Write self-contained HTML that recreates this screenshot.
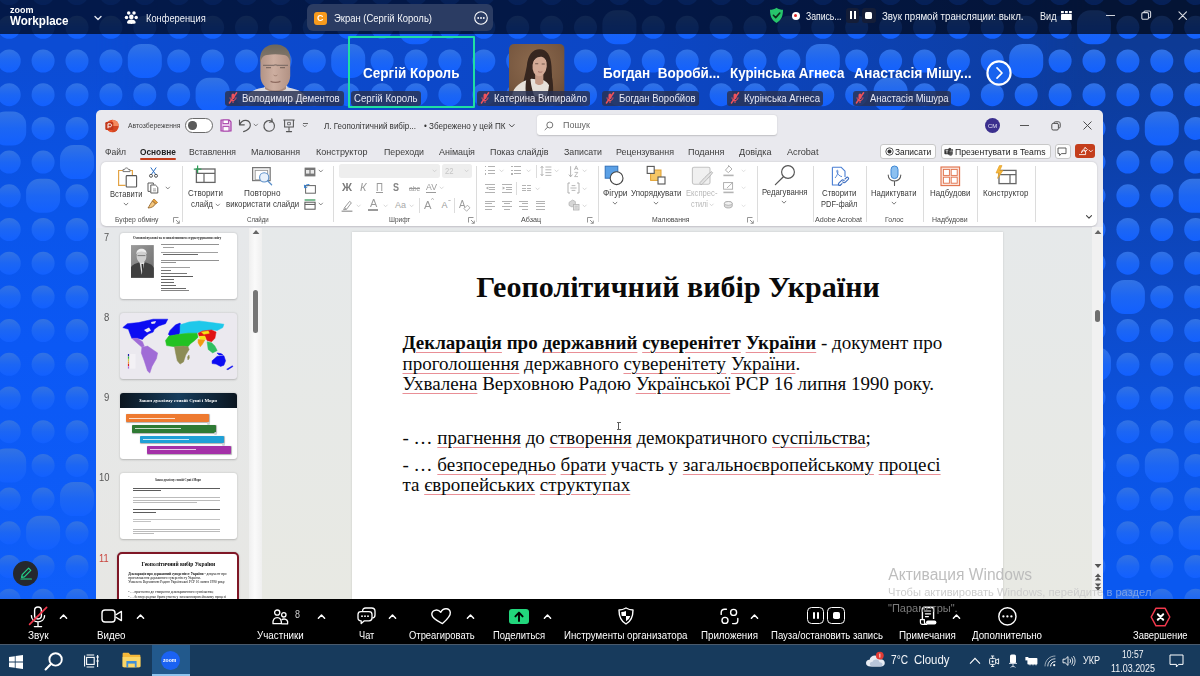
<!DOCTYPE html><html><head><meta charset="utf-8"><title>Zoom</title><style>
html,body{margin:0;padding:0;}
body{width:1200px;height:676px;overflow:hidden;position:relative;background:#0c4cd4;font-family:"Liberation Sans",sans-serif;}
.bg{position:absolute;left:0;top:0;}
.t{position:absolute;white-space:nowrap;transform-origin:0 50%;}
.i{position:absolute;overflow:visible;}
#topbar{position:absolute;left:0;top:0;width:1200px;height:33.5px;background:rgba(0,1,8,0.675);}
.lbl{position:absolute;top:90.8px;height:14.8px;border-radius:3px;background:rgba(42,50,82,0.84);}
#pptwin{position:absolute;left:95.5px;top:109.8px;width:1007.5px;height:489px;background:#e9e9ee;border-radius:5px 5px 0 0;}
.btn{position:absolute;top:143.8px;height:13.4px;border:0.8px solid #c8c8c8;border-radius:3px;background:#fdfdfd;}
#ribbon{position:absolute;left:100.5px;top:161.8px;width:996.5px;height:63.8px;background:#fff;border-radius:5px;box-shadow:0 0.5px 2px rgba(0,0,0,0.18);}
#panel{position:absolute;left:95.5px;top:227.5px;width:154px;height:372px;background:linear-gradient(#e6e8ea,#e7e7e4);}
#ptrack{position:absolute;left:249.3px;top:227.5px;width:13px;height:372px;background:linear-gradient(90deg,#efefef,#fafafa 45%,#efefef);}
#main{position:absolute;left:262.3px;top:227.5px;width:830px;height:372px;background:linear-gradient(#e6e9ea,#e8e9e3);}
.th{position:absolute;left:120px;width:117px;height:66.4px;background:#fff;border-radius:3px;box-shadow:0 0.5px 2px rgba(0,0,0,0.22);box-sizing:border-box;}
#slide{position:absolute;left:352.3px;top:232.4px;width:650.7px;height:367px;background:#fff;box-shadow:0 0 2px rgba(0,0,0,0.15);}
.st{position:absolute;white-space:nowrap;font-family:"Liberation Serif",serif;color:#0a0a0a;}
#ztool{position:absolute;left:0;top:598.6px;width:1200px;height:46px;background:#000;}
#taskbar{position:absolute;left:0;top:644.2px;width:1200px;height:32px;background:#173a5c;}
</style></head><body><svg class="bg" width="1200" height="676" viewBox="0 0 1200 676"><defs><linearGradient id="gT" x1="0" x2="1" y1="0" y2="0"><stop offset="0" stop-color="#0c4cd4"/><stop offset="0.55" stop-color="#0c46c4"/><stop offset="1" stop-color="#0d3a94"/></linearGradient><linearGradient id="gB" x1="0" x2="1" y1="0" y2="0"><stop offset="0" stop-color="#1462fa"/><stop offset="1" stop-color="#1659e2"/></linearGradient><linearGradient id="gM" x1="0" x2="0" y1="0" y2="1"><stop offset="0.05" stop-color="#000"/><stop offset="0.85" stop-color="#fff"/></linearGradient><mask id="mk"><rect width="1200" height="676" fill="url(#gM)"/></mask><linearGradient id="gD" x1="0" x2="0" y1="0" y2="1"><stop offset="0" stop-color="#3272e4"/><stop offset="0.5" stop-color="#1c66f4"/><stop offset="1" stop-color="#1260ff"/></linearGradient></defs><rect width="1200" height="676" fill="url(#gT)"/><defs><linearGradient id="gL" gradientUnits="userSpaceOnUse" x1="0" y1="0" x2="0" y2="676"><stop offset="0.0888" stop-color="#0c4cd4"/><stop offset="0.3180" stop-color="#0a55ea"/><stop offset="0.5133" stop-color="#0b58f5"/><stop offset="0.8876" stop-color="#0f5ef9"/></linearGradient><linearGradient id="gR" gradientUnits="userSpaceOnUse" x1="0" y1="0" x2="0" y2="676"><stop offset="0.0666" stop-color="#0d3a95"/><stop offset="0.2219" stop-color="#0c3fa8"/><stop offset="0.4438" stop-color="#0d4ac8"/><stop offset="0.6657" stop-color="#0b54e4"/><stop offset="0.8432" stop-color="#0a58f0"/></linearGradient><linearGradient id="fL" x1="0" x2="1"><stop offset="0.6" stop-color="#fff"/><stop offset="1" stop-color="#000"/></linearGradient><mask id="mL"><rect x="0" y="0" width="160" height="676" fill="url(#fL)"/></mask><linearGradient id="fR" x1="0" x2="1"><stop offset="0" stop-color="#000"/><stop offset="0.4" stop-color="#fff"/></linearGradient><mask id="mR"><rect x="1040" y="0" width="160" height="676" fill="url(#fR)"/></mask></defs><rect x="0" y="0" width="160" height="676" fill="url(#gL)" mask="url(#mL)"/><rect x="1040" y="0" width="160" height="676" fill="url(#gR)" mask="url(#mR)"/><g fill="url(#gD)"><circle cx="9.2" cy="-6.4" r="11.5"/><circle cx="43.1" cy="-6.4" r="11.5"/><circle cx="77.0" cy="-6.4" r="11.5"/><circle cx="110.9" cy="-6.4" r="11.5"/><circle cx="144.8" cy="-6.4" r="11.5"/><circle cx="178.7" cy="-6.4" r="11.5"/><circle cx="212.6" cy="-6.4" r="11.5"/><circle cx="246.5" cy="-6.4" r="11.5"/><circle cx="280.4" cy="-6.4" r="11.5"/><circle cx="314.3" cy="-6.4" r="11.5"/><circle cx="348.2" cy="-6.4" r="11.5"/><circle cx="382.1" cy="-6.4" r="11.5"/><circle cx="416.0" cy="-6.4" r="11.5"/><circle cx="449.9" cy="-6.4" r="11.5"/><circle cx="483.8" cy="-6.4" r="11.5"/><circle cx="517.7" cy="-6.4" r="11.5"/><circle cx="551.6" cy="-6.4" r="11.5"/><circle cx="585.5" cy="-6.4" r="11.5"/><circle cx="619.4" cy="-6.4" r="11.5"/><circle cx="653.3" cy="-6.4" r="11.5"/><circle cx="687.2" cy="-6.4" r="11.5"/><circle cx="721.1" cy="-6.4" r="11.5"/><circle cx="755.0" cy="-6.4" r="11.5"/><circle cx="788.9" cy="-6.4" r="11.5"/><circle cx="822.8" cy="-6.4" r="11.5"/><circle cx="856.7" cy="-6.4" r="11.5"/><circle cx="890.6" cy="-6.4" r="11.5"/><circle cx="924.5" cy="-6.4" r="11.5"/><circle cx="958.4" cy="-6.4" r="11.5"/><circle cx="992.3" cy="-6.4" r="11.5"/><circle cx="1026.2" cy="-6.4" r="11.5"/><circle cx="1060.1" cy="-6.4" r="11.5"/><circle cx="1094.0" cy="-6.4" r="11.5"/><circle cx="1127.9" cy="-6.4" r="11.5"/><circle cx="1161.8" cy="-6.4" r="11.5"/><circle cx="1195.7" cy="-6.4" r="11.5"/><circle cx="9.2" cy="27.3" r="11.5"/><circle cx="43.1" cy="27.3" r="11.5"/><circle cx="77.0" cy="27.3" r="11.5"/><circle cx="110.9" cy="27.3" r="11.5"/><circle cx="144.8" cy="27.3" r="11.5"/><circle cx="178.7" cy="27.3" r="11.5"/><circle cx="212.6" cy="27.3" r="11.5"/><circle cx="246.5" cy="27.3" r="11.5"/><circle cx="280.4" cy="27.3" r="11.5"/><circle cx="314.3" cy="27.3" r="11.5"/><circle cx="348.2" cy="27.3" r="11.5"/><circle cx="382.1" cy="27.3" r="11.5"/><rect x="399.0" y="10.3" width="34" height="34" rx="13.5"/><circle cx="449.9" cy="27.3" r="11.5"/><circle cx="483.8" cy="27.3" r="11.5"/><circle cx="517.7" cy="27.3" r="11.5"/><circle cx="551.6" cy="27.3" r="11.5"/><circle cx="585.5" cy="27.3" r="11.5"/><rect x="602.4" y="10.3" width="34" height="34" rx="13.5"/><circle cx="653.3" cy="27.3" r="11.5"/><circle cx="687.2" cy="27.3" r="11.5"/><circle cx="721.1" cy="27.3" r="11.5"/><circle cx="755.0" cy="27.3" r="11.5"/><circle cx="788.9" cy="27.3" r="11.5"/><circle cx="822.8" cy="27.3" r="11.5"/><circle cx="856.7" cy="27.3" r="11.5"/><circle cx="890.6" cy="27.3" r="11.5"/><circle cx="924.5" cy="27.3" r="11.5"/><circle cx="958.4" cy="27.3" r="11.5"/><circle cx="992.3" cy="27.3" r="11.5"/><circle cx="1026.2" cy="27.3" r="11.5"/><circle cx="1060.1" cy="27.3" r="11.5"/><rect x="1077.0" y="10.3" width="34" height="34" rx="13.5"/><circle cx="1127.9" cy="27.3" r="11.5"/><circle cx="1161.8" cy="27.3" r="11.5"/><circle cx="1195.7" cy="27.3" r="11.5"/><circle cx="9.2" cy="61.0" r="11.5"/><circle cx="43.1" cy="61.0" r="11.5"/><circle cx="77.0" cy="61.0" r="11.5"/><circle cx="110.9" cy="61.0" r="11.5"/><rect x="127.8" y="44.0" width="34" height="34" rx="13.5"/><circle cx="178.7" cy="61.0" r="11.5"/><circle cx="212.6" cy="61.0" r="11.5"/><circle cx="246.5" cy="61.0" r="11.5"/><circle cx="280.4" cy="61.0" r="11.5"/><circle cx="314.3" cy="61.0" r="11.5"/><rect x="331.2" y="44.0" width="34" height="34" rx="13.5"/><circle cx="382.1" cy="61.0" r="11.5"/><circle cx="416.0" cy="61.0" r="11.5"/><circle cx="449.9" cy="61.0" r="11.5"/><circle cx="483.8" cy="61.0" r="11.5"/><circle cx="517.7" cy="61.0" r="11.5"/><circle cx="551.6" cy="61.0" r="11.5"/><circle cx="585.5" cy="61.0" r="11.5"/><circle cx="619.4" cy="61.0" r="11.5"/><circle cx="653.3" cy="61.0" r="11.5"/><circle cx="687.2" cy="61.0" r="11.5"/><circle cx="721.1" cy="61.0" r="11.5"/><circle cx="755.0" cy="61.0" r="11.5"/><circle cx="788.9" cy="61.0" r="11.5"/><rect x="805.8" y="44.0" width="34" height="34" rx="13.5"/><circle cx="856.7" cy="61.0" r="11.5"/><circle cx="890.6" cy="61.0" r="11.5"/><circle cx="924.5" cy="61.0" r="11.5"/><circle cx="958.4" cy="61.0" r="11.5"/><circle cx="992.3" cy="61.0" r="11.5"/><rect x="1009.2" y="44.0" width="34" height="34" rx="13.5"/><circle cx="1060.1" cy="61.0" r="11.5"/><circle cx="1094.0" cy="61.0" r="11.5"/><circle cx="1127.9" cy="61.0" r="11.5"/><circle cx="1161.8" cy="61.0" r="11.5"/><circle cx="1195.7" cy="61.0" r="11.5"/><circle cx="9.2" cy="94.7" r="11.5"/><circle cx="43.1" cy="94.7" r="11.5"/><circle cx="77.0" cy="94.7" r="11.5"/><circle cx="110.9" cy="94.7" r="11.5"/><circle cx="144.8" cy="94.7" r="11.5"/><circle cx="178.7" cy="94.7" r="11.5"/><rect x="195.6" y="77.7" width="34" height="34" rx="13.5"/><circle cx="246.5" cy="94.7" r="11.5"/><circle cx="280.4" cy="94.7" r="11.5"/><circle cx="314.3" cy="94.7" r="11.5"/><circle cx="348.2" cy="94.7" r="11.5"/><circle cx="382.1" cy="94.7" r="11.5"/><circle cx="416.0" cy="94.7" r="11.5"/><circle cx="449.9" cy="94.7" r="11.5"/><circle cx="483.8" cy="94.7" r="11.5"/><circle cx="517.7" cy="94.7" r="11.5"/><circle cx="551.6" cy="94.7" r="11.5"/><circle cx="585.5" cy="94.7" r="11.5"/><circle cx="619.4" cy="94.7" r="11.5"/><circle cx="653.3" cy="94.7" r="11.5"/><circle cx="687.2" cy="94.7" r="11.5"/><circle cx="721.1" cy="94.7" r="11.5"/><circle cx="755.0" cy="94.7" r="11.5"/><circle cx="788.9" cy="94.7" r="11.5"/><circle cx="822.8" cy="94.7" r="11.5"/><circle cx="856.7" cy="94.7" r="11.5"/><rect x="873.6" y="77.7" width="34" height="34" rx="13.5"/><circle cx="924.5" cy="94.7" r="11.5"/><circle cx="958.4" cy="94.7" r="11.5"/><circle cx="992.3" cy="94.7" r="11.5"/><circle cx="1026.2" cy="94.7" r="11.5"/><circle cx="1060.1" cy="94.7" r="11.5"/><circle cx="1094.0" cy="94.7" r="11.5"/><circle cx="1127.9" cy="94.7" r="11.5"/><circle cx="1161.8" cy="94.7" r="11.5"/><circle cx="1195.7" cy="94.7" r="11.5"/><rect x="-7.8" y="111.4" width="34" height="34" rx="13.5"/><circle cx="43.1" cy="128.4" r="11.5"/><circle cx="77.0" cy="128.4" r="11.5"/><circle cx="110.9" cy="128.4" r="11.5"/><circle cx="1094.0" cy="128.4" r="11.5"/><circle cx="1127.9" cy="128.4" r="11.5"/><rect x="1144.8" y="111.4" width="34" height="34" rx="13.5"/><circle cx="1195.7" cy="128.4" r="11.5"/><circle cx="9.2" cy="162.1" r="11.5"/><circle cx="43.1" cy="162.1" r="11.5"/><rect x="60.0" y="145.1" width="34" height="34" rx="13.5"/><circle cx="110.9" cy="162.1" r="11.5"/><circle cx="1094.0" cy="162.1" r="11.5"/><circle cx="1127.9" cy="162.1" r="11.5"/><circle cx="1161.8" cy="162.1" r="11.5"/><circle cx="1195.7" cy="162.1" r="11.5"/><circle cx="9.2" cy="195.8" r="11.5"/><rect x="26.1" y="178.8" width="34" height="34" rx="13.5"/><circle cx="77.0" cy="195.8" r="11.5"/><circle cx="110.9" cy="195.8" r="11.5"/><circle cx="1094.0" cy="195.8" r="11.5"/><circle cx="1127.9" cy="195.8" r="11.5"/><circle cx="1161.8" cy="195.8" r="11.5"/><rect x="1178.7" y="178.8" width="34" height="34" rx="13.5"/><circle cx="9.2" cy="229.5" r="11.5"/><circle cx="43.1" cy="229.5" r="11.5"/><circle cx="77.0" cy="229.5" r="11.5"/><circle cx="110.9" cy="229.5" r="11.5"/><circle cx="1094.0" cy="229.5" r="11.5"/><circle cx="1127.9" cy="229.5" r="11.5"/><circle cx="1161.8" cy="229.5" r="11.5"/><circle cx="1195.7" cy="229.5" r="11.5"/><circle cx="9.2" cy="263.2" r="11.5"/><circle cx="43.1" cy="263.2" r="11.5"/><circle cx="77.0" cy="263.2" r="11.5"/><circle cx="110.9" cy="263.2" r="11.5"/><circle cx="1094.0" cy="263.2" r="11.5"/><circle cx="1127.9" cy="263.2" r="11.5"/><circle cx="1161.8" cy="263.2" r="11.5"/><circle cx="1195.7" cy="263.2" r="11.5"/><circle cx="9.2" cy="296.9" r="11.5"/><circle cx="43.1" cy="296.9" r="11.5"/><circle cx="77.0" cy="296.9" r="11.5"/><circle cx="110.9" cy="296.9" r="11.5"/><circle cx="1094.0" cy="296.9" r="11.5"/><rect x="1110.9" y="279.9" width="34" height="34" rx="13.5"/><circle cx="1161.8" cy="296.9" r="11.5"/><circle cx="1195.7" cy="296.9" r="11.5"/><circle cx="9.2" cy="330.6" r="11.5"/><circle cx="43.1" cy="330.6" r="11.5"/><circle cx="77.0" cy="330.6" r="11.5"/><circle cx="110.9" cy="330.6" r="11.5"/><circle cx="1094.0" cy="330.6" r="11.5"/><circle cx="1127.9" cy="330.6" r="11.5"/><circle cx="1161.8" cy="330.6" r="11.5"/><circle cx="1195.7" cy="330.6" r="11.5"/><circle cx="9.2" cy="364.3" r="11.5"/><circle cx="43.1" cy="364.3" r="11.5"/><circle cx="77.0" cy="364.3" r="11.5"/><circle cx="110.9" cy="364.3" r="11.5"/><rect x="1077.0" y="347.3" width="34" height="34" rx="13.5"/><circle cx="1127.9" cy="364.3" r="11.5"/><circle cx="1161.8" cy="364.3" r="11.5"/><circle cx="1195.7" cy="364.3" r="11.5"/><circle cx="9.2" cy="398.0" r="11.5"/><circle cx="43.1" cy="398.0" r="11.5"/><circle cx="77.0" cy="398.0" r="11.5"/><circle cx="110.9" cy="398.0" r="11.5"/><circle cx="1094.0" cy="398.0" r="11.5"/><circle cx="1127.9" cy="398.0" r="11.5"/><circle cx="1161.8" cy="398.0" r="11.5"/><circle cx="1195.7" cy="398.0" r="11.5"/><circle cx="9.2" cy="431.7" r="11.5"/><circle cx="43.1" cy="431.7" r="11.5"/><circle cx="77.0" cy="431.7" r="11.5"/><circle cx="110.9" cy="431.7" r="11.5"/><circle cx="1094.0" cy="431.7" r="11.5"/><circle cx="1127.9" cy="431.7" r="11.5"/><circle cx="1161.8" cy="431.7" r="11.5"/><circle cx="1195.7" cy="431.7" r="11.5"/><rect x="-7.8" y="448.4" width="34" height="34" rx="13.5"/><circle cx="43.1" cy="465.4" r="11.5"/><circle cx="77.0" cy="465.4" r="11.5"/><circle cx="110.9" cy="465.4" r="11.5"/><circle cx="1094.0" cy="465.4" r="11.5"/><circle cx="1127.9" cy="465.4" r="11.5"/><rect x="1144.8" y="448.4" width="34" height="34" rx="13.5"/><circle cx="1195.7" cy="465.4" r="11.5"/><circle cx="9.2" cy="499.1" r="11.5"/><circle cx="43.1" cy="499.1" r="11.5"/><rect x="60.0" y="482.1" width="34" height="34" rx="13.5"/><circle cx="110.9" cy="499.1" r="11.5"/><circle cx="1094.0" cy="499.1" r="11.5"/><circle cx="1127.9" cy="499.1" r="11.5"/><circle cx="1161.8" cy="499.1" r="11.5"/><circle cx="1195.7" cy="499.1" r="11.5"/><circle cx="9.2" cy="532.8" r="11.5"/><rect x="26.1" y="515.8" width="34" height="34" rx="13.5"/><circle cx="77.0" cy="532.8" r="11.5"/><circle cx="110.9" cy="532.8" r="11.5"/><circle cx="1094.0" cy="532.8" r="11.5"/><circle cx="1127.9" cy="532.8" r="11.5"/><circle cx="1161.8" cy="532.8" r="11.5"/><rect x="1178.7" y="515.8" width="34" height="34" rx="13.5"/><circle cx="9.2" cy="566.5" r="11.5"/><circle cx="43.1" cy="566.5" r="11.5"/><circle cx="77.0" cy="566.5" r="11.5"/><circle cx="110.9" cy="566.5" r="11.5"/><circle cx="1094.0" cy="566.5" r="11.5"/><circle cx="1127.9" cy="566.5" r="11.5"/><circle cx="1161.8" cy="566.5" r="11.5"/><circle cx="1195.7" cy="566.5" r="11.5"/><circle cx="9.2" cy="600.2" r="11.5"/><circle cx="43.1" cy="600.2" r="11.5"/><circle cx="77.0" cy="600.2" r="11.5"/><circle cx="110.9" cy="600.2" r="11.5"/><circle cx="144.8" cy="600.2" r="11.5"/><circle cx="178.7" cy="600.2" r="11.5"/><circle cx="212.6" cy="600.2" r="11.5"/><circle cx="246.5" cy="600.2" r="11.5"/><circle cx="280.4" cy="600.2" r="11.5"/><circle cx="314.3" cy="600.2" r="11.5"/><circle cx="348.2" cy="600.2" r="11.5"/><circle cx="382.1" cy="600.2" r="11.5"/><circle cx="416.0" cy="600.2" r="11.5"/><circle cx="449.9" cy="600.2" r="11.5"/><circle cx="483.8" cy="600.2" r="11.5"/><circle cx="517.7" cy="600.2" r="11.5"/><circle cx="551.6" cy="600.2" r="11.5"/><circle cx="585.5" cy="600.2" r="11.5"/><circle cx="619.4" cy="600.2" r="11.5"/><circle cx="653.3" cy="600.2" r="11.5"/><circle cx="687.2" cy="600.2" r="11.5"/><circle cx="721.1" cy="600.2" r="11.5"/><circle cx="755.0" cy="600.2" r="11.5"/><circle cx="788.9" cy="600.2" r="11.5"/><circle cx="822.8" cy="600.2" r="11.5"/><circle cx="856.7" cy="600.2" r="11.5"/><circle cx="890.6" cy="600.2" r="11.5"/><circle cx="924.5" cy="600.2" r="11.5"/><circle cx="958.4" cy="600.2" r="11.5"/><circle cx="992.3" cy="600.2" r="11.5"/><circle cx="1026.2" cy="600.2" r="11.5"/><circle cx="1060.1" cy="600.2" r="11.5"/><circle cx="1094.0" cy="600.2" r="11.5"/><circle cx="1127.9" cy="600.2" r="11.5"/><circle cx="1161.8" cy="600.2" r="11.5"/><circle cx="1195.7" cy="600.2" r="11.5"/></g></svg><div id="topbar"><span class="t" style="left:10.0px;top:3.8px;font-size:9.6px;line-height:12px;color:#fff;font-weight:bold;transform:scaleX(0.938);">zoom</span><span class="t" style="left:10.0px;top:14.2px;font-size:12px;line-height:14px;color:#fff;font-weight:bold;transform:scaleX(0.968);">Workplace</span><svg class="i" style="left:92.5px;top:13.2px" width="10" height="10" viewBox="0 0 10 10"><path d="M2 3.5 L5 6.5 L8 3.5" fill="none" stroke="#dfe4ee" stroke-width="1.4" stroke-linecap="round" stroke-linejoin="round"/></svg><svg class="i" style="left:124px;top:10px" width="15" height="15" viewBox="0 0 15 15"><g fill="#fff"><circle cx="4.7" cy="2.9" r="1.75"/><circle cx="10" cy="2.9" r="1.75"/><circle cx="2.5" cy="7.4" r="1.75"/><circle cx="12.2" cy="7.4" r="1.75"/><circle cx="7.35" cy="6.9" r="2.3"/><path d="M3 13 C3 10.6 5 9.6 7.35 9.6 C9.7 9.6 11.7 10.6 11.7 13 C10.4 14.2 4.3 14.2 3 13Z"/></g></svg><span class="t" style="left:146.3px;top:11.7px;font-size:10.5px;line-height:13px;color:#eef0f6;transform:scaleX(0.887);">Конференция</span><div style="position:absolute;left:307px;top:4px;width:186px;height:27px;border-radius:6px;background:#2b3c63"></div><div style="position:absolute;left:314px;top:12px;width:12.5px;height:12.5px;border-radius:3px;background:#f79a1c"></div><span class="t" style="left:317.0px;top:12.8px;font-size:9px;line-height:11px;color:#fff;font-weight:bold;transform:scaleX(0.985);">C</span><span class="t" style="left:334.0px;top:11.5px;font-size:11px;line-height:13px;color:#f4f6fa;transform:scaleX(0.860);">Экран (Сергій Король)</span><svg class="i" style="left:473px;top:10px" width="16" height="16" viewBox="0 0 16 16"><circle cx="8" cy="8" r="6.3" fill="none" stroke="#fff" stroke-width="1.1"/><g fill="#fff"><circle cx="5.2" cy="8" r="0.9"/><circle cx="8" cy="8" r="0.9"/><circle cx="10.8" cy="8" r="0.9"/></g></svg><svg class="i" style="left:769px;top:7.4px" width="15" height="17" viewBox="0 0 15 17"><path d="M7.5 0.8 C9.5 2.2 11.8 2.8 14 2.8 C14 8.5 12.6 13.2 7.5 16 C2.4 13.2 1 8.5 1 2.8 C3.2 2.8 5.5 2.2 7.5 0.8Z" fill="#27c46b"/><path d="M4.4 8.3 L6.7 10.6 L10.8 6" fill="none" stroke="#0c2a1a" stroke-width="1.6" stroke-linecap="round" stroke-linejoin="round"/></svg><div style="position:absolute;left:791.5px;top:11.6px;width:8px;height:8px;border-radius:50%;background:#fff"></div><div style="position:absolute;left:794px;top:14.1px;width:3px;height:3px;border-radius:50%;background:#e02828"></div><span class="t" style="left:805.5px;top:10.3px;font-size:10.5px;line-height:13px;color:#f2f4f8;transform:scaleX(0.822);">Запись...</span><div style="position:absolute;left:846px;top:7.8px;width:13px;height:15px;border-radius:3px;background:#141d38"></div><div style="position:absolute;left:850px;top:11.3px;width:2px;height:8px;background:#fff"></div><div style="position:absolute;left:853.6px;top:11.3px;width:2px;height:8px;background:#fff"></div><div style="position:absolute;left:861.5px;top:7.8px;width:14px;height:15px;border-radius:3px;background:#141d38"></div><div style="position:absolute;left:865px;top:11.8px;width:7px;height:7px;border-radius:1.5px;background:#fff"></div><span class="t" style="left:882.0px;top:10.3px;font-size:10.5px;line-height:13px;color:#f2f4f8;transform:scaleX(0.924);">Звук прямой трансляции: выкл.</span><span class="t" style="left:1039.5px;top:10.3px;font-size:10.5px;line-height:13px;color:#f2f4f8;transform:scaleX(0.869);">Вид</span><svg class="i" style="left:1061px;top:11.4px" width="11" height="9" viewBox="0 0 11 9"><g fill="#fff"><rect x="0" y="0" width="2.8" height="2.2"/><rect x="4" y="0" width="2.8" height="2.2"/><rect x="8" y="0" width="2.8" height="2.2"/><rect x="0" y="3" width="10.8" height="6" rx="0.6"/></g></svg><div style="position:absolute;left:1106px;top:15px;width:9.2px;height:1.1px;background:#cfd3dc"></div><svg class="i" style="left:1141.4px;top:10.2px" width="10.6" height="10.6" viewBox="0 0 13 13"><rect x="1" y="3.2" width="8.2" height="8.2" rx="1.5" fill="none" stroke="#d4d7df" stroke-width="1.3"/><path d="M3.6 3.2 V2.6 C3.6 1.8 4.2 1.2 5 1.2 H10 C11 1.2 11.8 2 11.8 3 V8 C11.8 8.8 11.2 9.4 10.4 9.4 H9.4" fill="none" stroke="#d4d7df" stroke-width="1.3"/></svg><svg class="i" style="left:1177.6px;top:10.8px" width="9.4" height="9.4" viewBox="0 0 12 12"><path d="M1.2 1.2 L10.8 10.8 M10.8 1.2 L1.2 10.8" stroke="#d8dbe2" stroke-width="1.4" stroke-linecap="round"/></svg></div><svg class="i" style="left:226px;top:40px" width="92" height="62" viewBox="0 0 92 62"><defs><linearGradient id="sk" x1="0" x2="1"><stop offset="0" stop-color="#b39486"/><stop offset="0.45" stop-color="#cdaea0"/><stop offset="1" stop-color="#b29284"/></linearGradient><linearGradient id="hr" x1="0" x2="0" y1="0" y2="1"><stop offset="0" stop-color="#6c675c"/><stop offset="1" stop-color="#8a7c70"/></linearGradient></defs><path d="M18 62 C20 53 28 49 38 47.5 L40 45 H60 L62 47.5 C72 49 80 53 83 62Z" fill="#d6d6de"/><path d="M39 40 H60 V49 C55 53 45 53 39 49Z" fill="#a8897a"/><path d="M34.4 24 C34 11 40 5.6 49.3 5.6 C58.6 5.6 64.4 11 64.2 24 V36 C64 44 58 50.6 49.3 50.6 C40.6 50.6 34.6 44 34.4 36Z" fill="url(#sk)"/><path d="M34.2 24 C32.6 10 40 4.6 49.3 4.6 C58.6 4.6 66 10 64.4 24 C63.6 18 61.6 15.6 58 15 C52 14 46.6 14 41 15 C37 15.6 35 18 34.2 24Z" fill="url(#hr)"/><path d="M37 25.4 H47 M52 25.4 H62 M47 25.6 C48.6 24.6 50.4 24.6 52 25.6" stroke="#6f625c" stroke-width="1.3" fill="none" opacity="0.75"/><path d="M40 27.6 H45 M54 27.6 H59" stroke="#4c403a" stroke-width="1.1" opacity="0.55"/><path d="M47.6 35 C48.6 36 50.4 36 51.4 35" stroke="#8e6e60" stroke-width="0.9" fill="none" opacity="0.8"/><path d="M44.6 41.4 C47 42.6 52 42.6 54.4 41.4" stroke="#7e5a50" stroke-width="1.2" fill="none" opacity="0.8"/></svg><div class="lbl" style="left:225px;width:118.5px"></div><svg class="i" style="left:227.8px;top:92.2px" width="10" height="12" viewBox="0 0 10 12"><g fill="none" stroke="#ee525c" stroke-linecap="round"><rect x="3.5" y="1.4" width="3" height="5.6" rx="1.5" fill="#ee525c" stroke="none"/><path d="M2 5.8 C2 9.6 8 9.6 8 5.8 M5 8.8 V10.6" stroke-width="1"/><path d="M8.6 0.8 L1.4 11" stroke-width="1.5"/></g></svg><span class="t" style="left:242.3px;top:92.1px;font-size:10.5px;line-height:13px;color:#e6e8f4;transform:scaleX(0.920);">Володимир Дементов</span><div style="position:absolute;left:347.5px;top:36.3px;width:123px;height:67.4px;border:2px solid #1fe0a2;border-radius:1px"></div><span class="t" style="left:363.0px;top:65.0px;font-size:14.5px;line-height:17px;color:#fff;font-weight:bold;transform:scaleX(0.931);">Сергій Король</span><div class="lbl" style="left:350.5px;width:70px"></div><span class="t" style="left:353.8px;top:92.1px;font-size:10.5px;line-height:13px;color:#e6e8f4;transform:scaleX(0.919);">Сергій Король</span><svg class="i" style="left:509.2px;top:44.4px" width="55.6" height="52.3" viewBox="0 0 54.4 52" preserveAspectRatio="none"><defs><clipPath id="kc"><rect width="54.4" height="58" rx="5"/></clipPath><radialGradient id="kb" cx="0.45" cy="0.35" r="0.85"><stop offset="0" stop-color="#8c6a4e"/><stop offset="0.6" stop-color="#785840"/><stop offset="1" stop-color="#604632"/></radialGradient></defs><g clip-path="url(#kc)"><rect width="54.4" height="58" fill="url(#kb)"/><path d="M12 50 C13 40 16 30 17.4 22 C18.4 11 23 5.4 30 5.3 C37 5.4 41 11 41.6 22 C42 32 43 42 41.6 50Z" fill="#36261f"/><path d="M3 52 C4 42 12 37 22 34.6 L34 36 C38 38 41.6 43 42.8 52Z" fill="#e6e1da"/><path d="M25.6 29 H33.6 V39 C31 41.4 28 41.4 25.6 39Z" fill="#c49a86"/><ellipse cx="30" cy="21.6" rx="7" ry="10.6" fill="#d3aa96" transform="rotate(6 30 21.6)"/><path d="M22 21 C21.6 12 25 8.4 30 8.4 C35 8.4 38.6 11.4 38.2 21 C36.6 15 34 12.6 31 12.6 C27 12.6 23.6 15.6 22 21Z" fill="#36261f"/><path d="M21.6 20 C20 32 21 42 25 52 H17 C15 42 17 30 21.6 20Z M38.4 20 C40.4 32 40 42 37 52 H43 C44 42 42.4 30 38.4 20Z" fill="#36261f"/><path d="M25.6 19.6 H28.6 M32 20 H35" stroke="#4a342c" stroke-width="1" opacity="0.7"/><path d="M28.4 27.4 C29.6 28.2 31.4 28.2 32.6 27.6" stroke="#a06a60" stroke-width="0.9" fill="none"/></g></svg><div class="lbl" style="left:477px;width:113px"></div><svg class="i" style="left:479.8px;top:92.2px" width="10" height="12" viewBox="0 0 10 12"><g fill="none" stroke="#ee525c" stroke-linecap="round"><rect x="3.5" y="1.4" width="3" height="5.6" rx="1.5" fill="#ee525c" stroke="none"/><path d="M2 5.8 C2 9.6 8 9.6 8 5.8 M5 8.8 V10.6" stroke-width="1"/><path d="M8.6 0.8 L1.4 11" stroke-width="1.5"/></g></svg><span class="t" style="left:494.0px;top:92.1px;font-size:10.5px;line-height:13px;color:#e6e8f4;transform:scaleX(0.907);">Катерина Випирайло</span><span class="t" style="left:603.0px;top:65.0px;font-size:14.5px;line-height:17px;color:#fff;font-weight:bold;transform:scaleX(0.930);white-space:pre;">Богдан  Воробй...</span><div class="lbl" style="left:602px;width:96.7px"></div><svg class="i" style="left:604.8px;top:92.2px" width="10" height="12" viewBox="0 0 10 12"><g fill="none" stroke="#ee525c" stroke-linecap="round"><rect x="3.5" y="1.4" width="3" height="5.6" rx="1.5" fill="#ee525c" stroke="none"/><path d="M2 5.8 C2 9.6 8 9.6 8 5.8 M5 8.8 V10.6" stroke-width="1"/><path d="M8.6 0.8 L1.4 11" stroke-width="1.5"/></g></svg><span class="t" style="left:619.0px;top:92.1px;font-size:10.5px;line-height:13px;color:#e6e8f4;transform:scaleX(0.904);">Богдан Воробйов</span><span class="t" style="left:730.0px;top:65.0px;font-size:14.5px;line-height:17px;color:#fff;font-weight:bold;transform:scaleX(0.921);">Курінська Агнеса</span><div class="lbl" style="left:727px;width:96px"></div><svg class="i" style="left:729.8px;top:92.2px" width="10" height="12" viewBox="0 0 10 12"><g fill="none" stroke="#ee525c" stroke-linecap="round"><rect x="3.5" y="1.4" width="3" height="5.6" rx="1.5" fill="#ee525c" stroke="none"/><path d="M2 5.8 C2 9.6 8 9.6 8 5.8 M5 8.8 V10.6" stroke-width="1"/><path d="M8.6 0.8 L1.4 11" stroke-width="1.5"/></g></svg><span class="t" style="left:744.0px;top:92.1px;font-size:10.5px;line-height:13px;color:#e6e8f4;transform:scaleX(0.915);">Курінська Агнеса</span><span class="t" style="left:853.7px;top:65.0px;font-size:14.5px;line-height:17px;color:#fff;font-weight:bold;transform:scaleX(0.963);">Анастасія Мішу...</span><div class="lbl" style="left:852.5px;width:98.7px"></div><svg class="i" style="left:855.3px;top:92.2px" width="10" height="12" viewBox="0 0 10 12"><g fill="none" stroke="#ee525c" stroke-linecap="round"><rect x="3.5" y="1.4" width="3" height="5.6" rx="1.5" fill="#ee525c" stroke="none"/><path d="M2 5.8 C2 9.6 8 9.6 8 5.8 M5 8.8 V10.6" stroke-width="1"/><path d="M8.6 0.8 L1.4 11" stroke-width="1.5"/></g></svg><span class="t" style="left:869.5px;top:92.1px;font-size:10.5px;line-height:13px;color:#e6e8f4;transform:scaleX(0.903);">Анастасія Мішура</span><svg class="i" style="left:985px;top:58.5px" width="28" height="28" viewBox="0 0 28 28"><circle cx="14" cy="14" r="11.6" fill="#1763ee" stroke="#fff" stroke-width="2.1"/><path d="M12 8.8 L17 14 L12 19.2" fill="none" stroke="#fff" stroke-width="1.7" stroke-linecap="round" stroke-linejoin="round"/></svg><div id="pptwin"></div><svg class="i" style="left:104.5px;top:118.5px" width="14" height="14" viewBox="0 0 14 14"><circle cx="7.4" cy="7" r="6.3" fill="#e8532b"/><path d="M7.4 0.7 A6.3 6.3 0 0 1 13.7 7 H7.4Z" fill="#f48a5e"/><path d="M7.4 13.3 A6.3 6.3 0 0 0 13.7 7 H7.4Z" fill="#c43e1c" opacity="0.6"/><rect x="0.3" y="3" width="8" height="8" rx="1.2" fill="#c2371a"/><path d="M3 9.3 V4.8 H4.9 C6 4.8 6.6 5.4 6.6 6.3 C6.6 7.2 6 7.8 4.9 7.8 H3.2" fill="none" stroke="#fff" stroke-width="1"/></svg><span class="t" style="left:128.0px;top:121.0px;font-size:7.6px;line-height:9px;color:#444;transform:scaleX(0.898);">Автозбереження</span><div style="position:absolute;left:185px;top:118.3px;width:26px;height:12.4px;border:1px solid #6a6a6a;border-radius:8px;background:#fff"></div><div style="position:absolute;left:188.3px;top:121.3px;width:8.4px;height:8.4px;border-radius:50%;background:#5a5a5a"></div><svg class="i" style="left:219.5px;top:119px" width="12" height="13" viewBox="0 0 12 13"><path d="M1 1 H9.2 L11 2.8 V12 H1Z" fill="#e9c6ea" stroke="#a63ca8" stroke-width="1.2" stroke-linejoin="round"/><rect x="3" y="1" width="5.4" height="3.6" fill="#fff" stroke="#a63ca8" stroke-width="0.9"/><rect x="3" y="7.6" width="6" height="4.4" fill="#fff" stroke="#a63ca8" stroke-width="0.9"/></svg><svg class="i" style="left:238px;top:118px" width="14" height="15" viewBox="0 0 14 15"><path d="M1.5 2 V6.8 H6.3 M1.8 6.6 C3 3.6 5.4 2.2 8 2.4 C11 2.7 12.6 5 12.3 7.6 C12 10 9.6 12.2 5.6 13.6" fill="none" stroke="#555" stroke-width="1.15" stroke-linecap="round" stroke-linejoin="round"/></svg><svg class="i" style="left:252.7px;top:123.4px" width="5.6" height="4.2" viewBox="0 0 8 6"><path d="M1.5 1.6 L4 4.2 L6.5 1.6" fill="none" stroke="#555" stroke-width="1" stroke-linecap="round" stroke-linejoin="round"/></svg><svg class="i" style="left:262px;top:118px" width="14" height="15" viewBox="0 0 14 15"><path d="M9.6 3 C6.4 1.6 2.6 3.4 2 7 C1.4 10.6 4.2 13.4 7.4 13.2 C10.4 13 12.6 10.6 12.4 7.4 C12.3 5.6 11.4 4.2 10.2 3.4 M9.8 0.8 L10.3 3.6 L7.4 4.2" fill="none" stroke="#555" stroke-width="1.15" stroke-linecap="round" stroke-linejoin="round"/></svg><svg class="i" style="left:282.5px;top:118.5px" width="12" height="14" viewBox="0 0 12 14"><path d="M0.8 1 H11.2 M1.6 1 V8 H10.4 V1 M6 8 V11.6 M3.4 12.6 H8.6" fill="none" stroke="#555" stroke-width="1.05" stroke-linecap="round"/><path d="M4.6 3.4 H7.4 V5.8 H4.6Z" fill="none" stroke="#555" stroke-width="0.8"/></svg><div style="position:absolute;left:302.5px;top:122.5px;width:5px;height:1px;background:#666"></div><svg class="i" style="left:302.2px;top:124.4px" width="5.6" height="4.2" viewBox="0 0 8 6"><path d="M1.5 1.6 L4 4.2 L6.5 1.6" fill="none" stroke="#555" stroke-width="1" stroke-linecap="round" stroke-linejoin="round"/></svg><span class="t" style="left:324.0px;top:120.6px;font-size:8.6px;line-height:10px;color:#333;transform:scaleX(0.935);">Л. Геополітичний вибір...</span><span class="t" style="left:424.0px;top:120.6px;font-size:8.6px;line-height:10px;color:#333;transform:scaleX(0.939);">• Збережено у цей ПК</span><svg class="i" style="left:508.2px;top:123.0px" width="7.6" height="5.7" viewBox="0 0 8 6"><path d="M1.5 1.6 L4 4.2 L6.5 1.6" fill="none" stroke="#444" stroke-width="1" stroke-linecap="round" stroke-linejoin="round"/></svg><div style="position:absolute;left:536.5px;top:115.3px;width:240.5px;height:20px;background:#fff;border-radius:3px;box-shadow:0 0.5px 1.5px rgba(0,0,0,0.18)"></div><svg class="i" style="left:543.5px;top:120.5px" width="10" height="10" viewBox="0 0 10 10"><circle cx="5.8" cy="4" r="3" fill="none" stroke="#666" stroke-width="0.9"/><path d="M3.6 6.2 L1 8.8" stroke="#666" stroke-width="0.9" stroke-linecap="round"/></svg><span class="t" style="left:563.0px;top:120.1px;font-size:9.3px;line-height:11px;color:#666;transform:scaleX(0.963);">Пошук</span><div style="position:absolute;left:985px;top:118px;width:15.4px;height:15.4px;border-radius:50%;background:#3b2f8e"></div><span class="t" style="left:988.2px;top:122.3px;font-size:6.2px;line-height:7px;color:#e6e4f4;transform:scaleX(0.951);">СМ</span><div style="position:absolute;left:1020px;top:125px;width:8.5px;height:1px;background:#555"></div><svg class="i" style="left:1050.5px;top:120.5px" width="10" height="10" viewBox="0 0 10 10"><rect x="0.8" y="2.4" width="6.6" height="6.6" rx="1.4" fill="none" stroke="#444" stroke-width="0.95"/><path d="M2.8 2.2 C2.9 1.3 3.5 0.8 4.3 0.8 H7.4 C8.5 0.8 9.2 1.5 9.2 2.6 V5.8 C9.2 6.6 8.7 7.1 7.8 7.2" fill="none" stroke="#444" stroke-width="0.95"/></svg><svg class="i" style="left:1082.5px;top:121px" width="9" height="9" viewBox="0 0 9 9"><path d="M0.8 0.8 L8.2 8.2 M8.2 0.8 L0.8 8.2" stroke="#444" stroke-width="0.95" stroke-linecap="round"/></svg><span class="t" style="left:105.0px;top:145.6px;font-size:9.6px;line-height:12px;color:#3c3c3c;transform:scaleX(0.890);">Файл</span><span class="t" style="left:140.0px;top:145.6px;font-size:9.6px;line-height:12px;color:#1e1e1e;font-weight:bold;transform:scaleX(0.867);">Основне</span><span class="t" style="left:189.0px;top:145.6px;font-size:9.6px;line-height:12px;color:#3c3c3c;transform:scaleX(0.896);">Вставлення</span><span class="t" style="left:251.0px;top:145.6px;font-size:9.6px;line-height:12px;color:#3c3c3c;transform:scaleX(0.936);">Малювання</span><span class="t" style="left:316.0px;top:145.6px;font-size:9.6px;line-height:12px;color:#3c3c3c;transform:scaleX(0.941);">Конструктор</span><span class="t" style="left:384.0px;top:145.6px;font-size:9.6px;line-height:12px;color:#3c3c3c;transform:scaleX(0.920);">Переходи</span><span class="t" style="left:439.0px;top:145.6px;font-size:9.6px;line-height:12px;color:#3c3c3c;transform:scaleX(0.932);">Анімація</span><span class="t" style="left:490.0px;top:145.6px;font-size:9.6px;line-height:12px;color:#3c3c3c;transform:scaleX(0.930);">Показ слайдів</span><span class="t" style="left:564.0px;top:145.6px;font-size:9.6px;line-height:12px;color:#3c3c3c;transform:scaleX(0.918);">Записати</span><span class="t" style="left:616.0px;top:145.6px;font-size:9.6px;line-height:12px;color:#3c3c3c;transform:scaleX(0.927);">Рецензування</span><span class="t" style="left:688.0px;top:145.6px;font-size:9.6px;line-height:12px;color:#3c3c3c;transform:scaleX(0.942);">Подання</span><span class="t" style="left:739.0px;top:145.6px;font-size:9.6px;line-height:12px;color:#3c3c3c;transform:scaleX(0.941);">Довідка</span><span class="t" style="left:787.0px;top:145.6px;font-size:9.6px;line-height:12px;color:#3c3c3c;transform:scaleX(0.952);">Acrobat</span><div style="position:absolute;left:140px;top:157.6px;width:36px;height:2px;background:#c43e1c;border-radius:1px"></div><div class="btn" style="left:880px;width:54px"></div><svg class="i" style="left:884.5px;top:146.5px" width="9" height="9" viewBox="0 0 9 9"><circle cx="4.5" cy="4.5" r="3.7" fill="none" stroke="#333" stroke-width="0.8"/><circle cx="4.5" cy="4.5" r="2" fill="#333"/></svg><span class="t" style="left:894.6px;top:145.8px;font-size:9.4px;line-height:11px;color:#222;transform:scaleX(0.898);">Записати</span><div class="btn" style="left:941px;width:107.5px"></div><svg class="i" style="left:943.6px;top:146.6px" width="9.2" height="9.2" viewBox="0 0 10 10"><circle cx="6.3" cy="2.6" r="1.7" fill="#444"/><circle cx="8.8" cy="3.4" r="1.1" fill="#555"/><path d="M4.4 4.6 H9.6 V7.2 C9.6 8.6 8.6 9.4 7.2 9.4 C6 9.4 5 8.8 4.4 7.8Z" fill="#555"/><rect x="0.4" y="2.4" width="5.6" height="5.6" rx="0.8" fill="#333"/><path d="M1.8 4 H4.6 M3.2 4 V7" stroke="#fff" stroke-width="0.8"/></svg><span class="t" style="left:954.8px;top:145.8px;font-size:9.4px;line-height:11px;color:#222;transform:scaleX(0.925);">Презентувати в Teams</span><div class="btn" style="left:1055px;width:13.5px"></div><svg class="i" style="left:1057.3px;top:146.5px" width="10" height="10" viewBox="0 0 10 10"><path d="M1 1 H9 V6.6 H4.4 L2.6 8.6 V6.6 H1Z" fill="none" stroke="#444" stroke-width="0.85" stroke-linejoin="round"/></svg><div style="position:absolute;left:1075px;top:143.8px;width:19.6px;height:14.4px;border-radius:3px;background:#c43e1c"></div><svg class="i" style="left:1077.5px;top:146px" width="10" height="10" viewBox="0 0 10 10"><path d="M1.4 8.6 H7.6 V5 M3.6 6.4 C3.8 4.2 5.2 3 7 2.8 V1.2 L9.4 3.6 L7 6 V4.4 C5.6 4.4 4.4 5 3.6 6.4Z" fill="none" stroke="#fff" stroke-width="0.85" stroke-linejoin="round" stroke-linecap="round"/></svg><svg class="i" style="left:1087.5px;top:149.2px" width="5.6" height="4.2" viewBox="0 0 8 6"><path d="M1.5 1.6 L4 4.2 L6.5 1.6" fill="none" stroke="#fff" stroke-width="1.1" stroke-linecap="round" stroke-linejoin="round"/></svg><div id="ribbon"></div><svg class="i" style="left:117px;top:165.5px" width="21" height="22" viewBox="0 0 21 22"><path d="M3 4.5 H7 M13 4.5 H15.4 V9.5 M3 4.5 H1.6 V19.4 H8.5" fill="none" stroke="#e3a446" stroke-width="1.2"/><path d="M6 5.6 V3.6 H7.6 C7.6 1.4 11.4 1.4 11.4 3.6 H13 V5.6Z" fill="#fff" stroke="#777" stroke-width="1"/><rect x="9.2" y="9.6" width="10.4" height="11.4" rx="0.8" fill="#fff" stroke="#555" stroke-width="1.1"/></svg><span class="t" style="left:109.6px;top:188.9px;font-size:9.2px;line-height:11px;color:#3a3a3a;transform:scaleX(0.824);">Вставити</span><svg class="i" style="left:122.5px;top:201.9px" width="6" height="4.5" viewBox="0 0 8 6"><path d="M1.5 1.6 L4 4.2 L6.5 1.6" fill="none" stroke="#555" stroke-width="1" stroke-linecap="round" stroke-linejoin="round"/></svg><svg class="i" style="left:148.5px;top:166.5px" width="9" height="11" viewBox="0 0 9 11"><path d="M2 0.8 L6.6 7.4 M7 0.8 L2.4 7.4" stroke="#2b6fc4" stroke-width="1" stroke-linecap="round"/><circle cx="2" cy="8.8" r="1.5" fill="none" stroke="#444" stroke-width="0.9"/><circle cx="7" cy="8.8" r="1.5" fill="none" stroke="#444" stroke-width="0.9"/></svg><svg class="i" style="left:146.5px;top:182px" width="12" height="12" viewBox="0 0 12 12"><path d="M1 1 H6.4 V2.6 M1 1 V9.4 H3.4" fill="none" stroke="#555" stroke-width="0.95"/><path d="M3.8 3 H8.4 L10.8 5.4 V11 H3.8Z" fill="#fff" stroke="#555" stroke-width="0.95" stroke-linejoin="round"/><path d="M6 7 H9 M6 8.8 H9" stroke="#777" stroke-width="0.7"/></svg><svg class="i" style="left:165.2px;top:186.1px" width="5.6" height="4.2" viewBox="0 0 8 6"><path d="M1.5 1.6 L4 4.2 L6.5 1.6" fill="none" stroke="#555" stroke-width="1" stroke-linecap="round" stroke-linejoin="round"/></svg><svg class="i" style="left:147px;top:198px" width="12" height="11" viewBox="0 0 12 11"><path d="M7 1 L10.6 4.4 L8.8 6 L5.4 2.6Z" fill="#e8a33d" stroke="#a86a1c" stroke-width="0.7"/><path d="M5.4 3 L8.4 6 C7 8.6 4 10 1 10 C2.4 8 3.4 5.6 5.4 3Z" fill="#f4c77e" stroke="#8a5a22" stroke-width="0.8" stroke-linejoin="round"/></svg><span class="t" style="left:115.0px;top:214.8px;font-size:8px;line-height:10px;color:#4a4a4a;transform:scaleX(0.849);">Буфер обміну</span><svg class="i" style="left:173.0px;top:216.5px" width="7" height="7" viewBox="0 0 7 7"><path d="M0.5 5.5 V0.5 H5.5 M3 3 L6.2 6.2 M6.3 3.6 V6.3 H3.6" fill="none" stroke="#8a8a8a" stroke-width="0.9"/></svg><div style="position:absolute;left:181.5px;top:166px;width:1px;height:56px;background:#dcdcdc"></div><svg class="i" style="left:193px;top:165px" width="24" height="19" viewBox="0 0 24 19"><rect x="3.4" y="4" width="18.6" height="13.4" fill="#fff" stroke="#666" stroke-width="1.3"/><path d="M3.4 8.4 H22 M11 8.4 V17.4" stroke="#666" stroke-width="1.2"/><path d="M4.6 0.6 V8 M0.8 4.2 H8.4" stroke="#2e9e58" stroke-width="1.2"/></svg><span class="t" style="left:187.7px;top:187.7px;font-size:9.2px;line-height:11px;color:#3a3a3a;transform:scaleX(0.865);">Створити</span><span class="t" style="left:191.0px;top:198.8px;font-size:9.2px;line-height:11px;color:#3a3a3a;transform:scaleX(0.860);">слайд</span><svg class="i" style="left:214.7px;top:202.7px" width="5.6" height="4.2" viewBox="0 0 8 6"><path d="M1.5 1.6 L4 4.2 L6.5 1.6" fill="none" stroke="#555" stroke-width="1" stroke-linecap="round" stroke-linejoin="round"/></svg><svg class="i" style="left:251px;top:166px" width="24" height="22" viewBox="0 0 24 22"><rect x="1.6" y="1.6" width="17.6" height="13" fill="#f2f2f2" stroke="#777" stroke-width="1.2"/><rect x="4.2" y="4.4" width="12.4" height="9.4" fill="#fff" stroke="#999" stroke-width="0.9"/><circle cx="13.2" cy="11.4" r="4.6" fill="#e8f1fb" stroke="#5b8fc9" stroke-width="1.1"/><path d="M16.6 14.8 L20.6 18.8" stroke="#5b8fc9" stroke-width="1.3" stroke-linecap="round"/></svg><span class="t" style="left:244.0px;top:187.7px;font-size:9.2px;line-height:11px;color:#3a3a3a;transform:scaleX(0.891);">Повторно</span><span class="t" style="left:225.8px;top:198.8px;font-size:9.2px;line-height:11px;color:#3a3a3a;transform:scaleX(0.853);">використати слайди</span><svg class="i" style="left:304px;top:166.5px" width="12" height="10" viewBox="0 0 12 10"><rect x="0.6" y="0.6" width="10.8" height="8.8" fill="#777"/><rect x="2" y="3" width="3.4" height="3.6" fill="#e8e8e8"/><rect x="6.6" y="3" width="3.4" height="3.6" fill="#e8e8e8"/></svg><svg class="i" style="left:317.7px;top:169.4px" width="5.6" height="4.2" viewBox="0 0 8 6"><path d="M1.5 1.6 L4 4.2 L6.5 1.6" fill="none" stroke="#555" stroke-width="1" stroke-linecap="round" stroke-linejoin="round"/></svg><svg class="i" style="left:304px;top:182.5px" width="12" height="11" viewBox="0 0 12 11"><rect x="1.6" y="2.6" width="9.8" height="7.6" fill="#fff" stroke="#666" stroke-width="1"/><path d="M0.6 4.6 C1 2.4 3 1 5.4 1.6 M0.4 1.8 L0.7 4.8 L3.4 4" fill="none" stroke="#2b7cd3" stroke-width="0.95"/></svg><svg class="i" style="left:304px;top:198.5px" width="12" height="11" viewBox="0 0 12 11"><path d="M0.6 1 H11.4" stroke="#3a9a5c" stroke-width="1.3"/><rect x="0.9" y="3.2" width="10.2" height="7" fill="#fff" stroke="#555" stroke-width="1"/><path d="M0.9 5.4 H11.1" stroke="#555" stroke-width="1"/></svg><svg class="i" style="left:317.7px;top:202.4px" width="5.6" height="4.2" viewBox="0 0 8 6"><path d="M1.5 1.6 L4 4.2 L6.5 1.6" fill="none" stroke="#555" stroke-width="1" stroke-linecap="round" stroke-linejoin="round"/></svg><span class="t" style="left:246.7px;top:214.8px;font-size:8px;line-height:10px;color:#4a4a4a;transform:scaleX(0.761);">Слайди</span><div style="position:absolute;left:332.5px;top:166px;width:1px;height:56px;background:#dcdcdc"></div><div style="position:absolute;left:338.5px;top:164.3px;width:101.5px;height:13.5px;border-radius:2.5px;background:#eeeeee"></div><div style="position:absolute;left:442px;top:164.3px;width:30px;height:13.5px;border-radius:2.5px;background:#eeeeee"></div><svg class="i" style="left:432.4px;top:169.2px" width="5.2" height="3.9" viewBox="0 0 8 6"><path d="M1.5 1.6 L4 4.2 L6.5 1.6" fill="none" stroke="#c4c4c4" stroke-width="1" stroke-linecap="round" stroke-linejoin="round"/></svg><span class="t" style="left:445.0px;top:166.2px;font-size:8.6px;line-height:10px;color:#c6c6c6;transform:scaleX(0.889);">22</span><svg class="i" style="left:464.4px;top:169.2px" width="5.2" height="3.9" viewBox="0 0 8 6"><path d="M1.5 1.6 L4 4.2 L6.5 1.6" fill="none" stroke="#c4c4c4" stroke-width="1" stroke-linecap="round" stroke-linejoin="round"/></svg><span class="t" style="left:341.5px;top:181.8px;font-size:10.2px;line-height:12px;color:#7c7c7c;font-weight:bold;transform:scaleX(1.085);">Ж</span><span class="t" style="left:360.0px;top:181.8px;font-size:10.2px;line-height:12px;color:#9a9a9a;font-style:italic;transform:scaleX(1.081);">К</span><span class="t" style="left:376.0px;top:181.6px;font-size:10.2px;line-height:12px;color:#9a9a9a;transform:scaleX(0.955);text-decoration:underline;text-decoration-thickness:0.8px;text-underline-offset:1px;">П</span><span class="t" style="left:393.0px;top:181.8px;font-size:10.2px;line-height:12px;color:#848484;font-weight:bold;transform:scaleX(0.882);">S</span><span class="t" style="left:408.5px;top:183.5px;font-size:7.2px;line-height:9px;color:#9a9a9a;transform:scaleX(0.948);text-decoration:line-through;">abc</span><span class="t" style="left:425.5px;top:181.1px;font-size:9.4px;line-height:11px;color:#9a9a9a;transform:scaleX(0.929);">AV</span><div style="position:absolute;left:426px;top:192.3px;width:10px;height:1px;background:#9a9a9a"></div><svg class="i" style="left:439.4px;top:186.1px" width="5.2" height="3.9" viewBox="0 0 8 6"><path d="M1.5 1.6 L4 4.2 L6.5 1.6" fill="none" stroke="#c4c4c4" stroke-width="1" stroke-linecap="round" stroke-linejoin="round"/></svg><svg class="i" style="left:340.5px;top:199.5px" width="12" height="12" viewBox="0 0 12 12"><path d="M3.6 7.6 L8.6 1.4 L10.4 2.8 L5.6 9.2 Z M3.6 7.6 L2.6 9.8 L5.6 9.2" fill="none" stroke="#8f8f8f" stroke-width="0.9" stroke-linejoin="round"/><path d="M0.6 11.2 H11.4" stroke="#9a9a9a" stroke-width="1.3"/></svg><svg class="i" style="left:355.9px;top:203.9px" width="5.2" height="3.9" viewBox="0 0 8 6"><path d="M1.5 1.6 L4 4.2 L6.5 1.6" fill="none" stroke="#c4c4c4" stroke-width="1" stroke-linecap="round" stroke-linejoin="round"/></svg><span class="t" style="left:369.5px;top:197.6px;font-size:10.4px;line-height:12px;color:#9a9a9a;transform:scaleX(1.052);">A</span><div style="position:absolute;left:368px;top:209.4px;width:10.4px;height:1.6px;background:#9a9a9a"></div><svg class="i" style="left:382.9px;top:203.9px" width="5.2" height="3.9" viewBox="0 0 8 6"><path d="M1.5 1.6 L4 4.2 L6.5 1.6" fill="none" stroke="#c4c4c4" stroke-width="1" stroke-linecap="round" stroke-linejoin="round"/></svg><span class="t" style="left:395.0px;top:199.5px;font-size:9px;line-height:11px;color:#a8a8a8;">Aa</span><svg class="i" style="left:408.9px;top:203.9px" width="5.2" height="3.9" viewBox="0 0 8 6"><path d="M1.5 1.6 L4 4.2 L6.5 1.6" fill="none" stroke="#c4c4c4" stroke-width="1" stroke-linecap="round" stroke-linejoin="round"/></svg><div style="position:absolute;left:419px;top:198px;width:1px;height:15px;background:#dcdcdc"></div><span class="t" style="left:423.5px;top:198.5px;font-size:11px;line-height:13px;color:#9a9a9a;transform:scaleX(1.022);">A</span><span class="t" style="left:431.0px;top:197.3px;font-size:6px;line-height:7px;color:#9a9a9a;transform:scaleX(1.066);">^</span><span class="t" style="left:441.5px;top:200.1px;font-size:9px;line-height:11px;color:#9a9a9a;">A</span><span class="t" style="left:447.5px;top:199.0px;font-size:7px;line-height:8px;color:#9a9a9a;transform:scaleX(1.287);">ˇ</span><div style="position:absolute;left:454px;top:198px;width:1px;height:15px;background:#dcdcdc"></div><span class="t" style="left:458.5px;top:198.1px;font-size:10.6px;line-height:13px;color:#9a9a9a;transform:scaleX(0.919);">A</span><svg class="i" style="left:463px;top:203.5px" width="8" height="8" viewBox="0 0 8 8"><path d="M1 4.6 L4.4 1.2 L7 3.8 L3.6 7.2Z" fill="#fff" stroke="#9a9a9a" stroke-width="0.8"/></svg><span class="t" style="left:389.0px;top:214.8px;font-size:8px;line-height:10px;color:#4a4a4a;transform:scaleX(0.809);">Шрифт</span><svg class="i" style="left:468.0px;top:216.5px" width="7" height="7" viewBox="0 0 7 7"><path d="M0.5 5.5 V0.5 H5.5 M3 3 L6.2 6.2 M6.3 3.6 V6.3 H3.6" fill="none" stroke="#8a8a8a" stroke-width="0.9"/></svg><div style="position:absolute;left:476px;top:166px;width:1px;height:56px;background:#dcdcdc"></div><div style="position:absolute;left:484.5px;top:165.9px;width:1.6px;height:1.6px;background:#b2b2b2"></div><div style="position:absolute;left:487.7px;top:166.2px;width:7px;height:1px;background:#b2b2b2"></div><div style="position:absolute;left:484.5px;top:169.5px;width:1.6px;height:1.6px;background:#b2b2b2"></div><div style="position:absolute;left:487.7px;top:169.8px;width:7px;height:1px;background:#b2b2b2"></div><div style="position:absolute;left:484.5px;top:173.1px;width:1.6px;height:1.6px;background:#b2b2b2"></div><div style="position:absolute;left:487.7px;top:173.4px;width:7px;height:1px;background:#b2b2b2"></div><svg class="i" style="left:499.4px;top:169.1px" width="5.2" height="3.9" viewBox="0 0 8 6"><path d="M1.5 1.6 L4 4.2 L6.5 1.6" fill="none" stroke="#c4c4c4" stroke-width="1" stroke-linecap="round" stroke-linejoin="round"/></svg><div style="position:absolute;left:511px;top:165.9px;width:1.6px;height:1.6px;background:#b2b2b2"></div><div style="position:absolute;left:514.2px;top:166.2px;width:7px;height:1px;background:#b2b2b2"></div><div style="position:absolute;left:511px;top:169.5px;width:1.6px;height:1.6px;background:#b2b2b2"></div><div style="position:absolute;left:514.2px;top:169.8px;width:7px;height:1px;background:#b2b2b2"></div><div style="position:absolute;left:511px;top:173.1px;width:1.6px;height:1.6px;background:#b2b2b2"></div><div style="position:absolute;left:514.2px;top:173.4px;width:7px;height:1px;background:#b2b2b2"></div><svg class="i" style="left:525.9px;top:169.1px" width="5.2" height="3.9" viewBox="0 0 8 6"><path d="M1.5 1.6 L4 4.2 L6.5 1.6" fill="none" stroke="#c4c4c4" stroke-width="1" stroke-linecap="round" stroke-linejoin="round"/></svg><div style="position:absolute;left:536px;top:164.5px;width:1px;height:13.5px;background:#dcdcdc"></div><svg class="i" style="left:539.5px;top:165px" width="12" height="12" viewBox="0 0 12 12"><path d="M2 1.4 V10.6 M0.6 3 L2 1.2 L3.4 3 M0.6 9 L2 10.8 L3.4 9" fill="none" stroke="#a8a8a8" stroke-width="0.8"/><path d="M5.4 2 H11.4 M5.4 4.8 H11.4 M5.4 7.6 H11.4 M5.4 10.4 H11.4" stroke="#b0b0b0" stroke-width="0.9"/></svg><svg class="i" style="left:554.4px;top:169.1px" width="5.2" height="3.9" viewBox="0 0 8 6"><path d="M1.5 1.6 L4 4.2 L6.5 1.6" fill="none" stroke="#c4c4c4" stroke-width="1" stroke-linecap="round" stroke-linejoin="round"/></svg><svg class="i" style="left:567.5px;top:164.5px" width="12" height="13" viewBox="0 0 12 13"><path d="M2.6 1.2 V11.6 M0.8 9.6 L2.6 11.8 L4.4 9.6" fill="none" stroke="#a8a8a8" stroke-width="0.85"/><path d="M6.4 5 L8.2 0.9 L10 5 M7 3.6 H9.4" fill="none" stroke="#a8a8a8" stroke-width="0.75"/><path d="M6.6 7.4 H9.8 L6.6 11.6 H10" fill="none" stroke="#a8a8a8" stroke-width="0.75"/></svg><svg class="i" style="left:581.9px;top:169.1px" width="5.2" height="3.9" viewBox="0 0 8 6"><path d="M1.5 1.6 L4 4.2 L6.5 1.6" fill="none" stroke="#c4c4c4" stroke-width="1" stroke-linecap="round" stroke-linejoin="round"/></svg><div style="position:absolute;left:485px;top:183.8px;width:9.5px;height:1px;background:#b2b2b2"></div><div style="position:absolute;left:489px;top:186.6px;width:5.5px;height:1px;background:#b2b2b2"></div><div style="position:absolute;left:489px;top:189.4px;width:5.5px;height:1px;background:#b2b2b2"></div><div style="position:absolute;left:485px;top:192.2px;width:9.5px;height:1px;background:#b2b2b2"></div><svg class="i" style="left:484.5px;top:185.6px" width="4" height="4.2" viewBox="0 0 4 4.2"><path d="M3.4 0.4 L0.8 2.1 L3.4 3.8Z" fill="#b0b0b0"/></svg><div style="position:absolute;left:502px;top:183.8px;width:9.5px;height:1px;background:#b2b2b2"></div><div style="position:absolute;left:506px;top:186.6px;width:5.5px;height:1px;background:#b2b2b2"></div><div style="position:absolute;left:506px;top:189.4px;width:5.5px;height:1px;background:#b2b2b2"></div><div style="position:absolute;left:502px;top:192.2px;width:9.5px;height:1px;background:#b2b2b2"></div><svg class="i" style="left:501.8px;top:185.6px" width="4" height="4.2" viewBox="0 0 4 4.2"><path d="M0.6 0.4 L3.2 2.1 L0.6 3.8Z" fill="#b0b0b0"/></svg><div style="position:absolute;left:516px;top:181.5px;width:1px;height:13.5px;background:#dcdcdc"></div><div style="position:absolute;left:521.5px;top:185px;width:4px;height:1px;background:#b4b4b4"></div><div style="position:absolute;left:521.5px;top:187.6px;width:4px;height:1px;background:#b4b4b4"></div><div style="position:absolute;left:521.5px;top:190.2px;width:4px;height:1px;background:#b4b4b4"></div><div style="position:absolute;left:527px;top:185px;width:4px;height:1px;background:#b4b4b4"></div><div style="position:absolute;left:527px;top:187.6px;width:4px;height:1px;background:#b4b4b4"></div><div style="position:absolute;left:527px;top:190.2px;width:4px;height:1px;background:#b4b4b4"></div><svg class="i" style="left:534.9px;top:186.5px" width="5.2" height="3.9" viewBox="0 0 8 6"><path d="M1.5 1.6 L4 4.2 L6.5 1.6" fill="none" stroke="#c4c4c4" stroke-width="1" stroke-linecap="round" stroke-linejoin="round"/></svg><svg class="i" style="left:567px;top:182px" width="13" height="12" viewBox="0 0 13 12"><path d="M3 1 H1 V11 H3 M10 1 H12 V11 H10" fill="none" stroke="#a8a8a8" stroke-width="0.9"/><path d="M3.4 6 H9.6 M4.6 3.6 H8.4 M4.6 8.4 H8.4" stroke="#b0b0b0" stroke-width="0.9"/></svg><svg class="i" style="left:581.9px;top:186.5px" width="5.2" height="3.9" viewBox="0 0 8 6"><path d="M1.5 1.6 L4 4.2 L6.5 1.6" fill="none" stroke="#c4c4c4" stroke-width="1" stroke-linecap="round" stroke-linejoin="round"/></svg><div style="position:absolute;left:485px;top:200.6px;width:9.5px;height:1px;background:#b2b2b2"></div><div style="position:absolute;left:485px;top:203.4px;width:6.5px;height:1px;background:#b2b2b2"></div><div style="position:absolute;left:485px;top:206.2px;width:9.5px;height:1px;background:#b2b2b2"></div><div style="position:absolute;left:485px;top:209px;width:6.5px;height:1px;background:#b2b2b2"></div><div style="position:absolute;left:502px;top:200.6px;width:9.5px;height:1px;background:#b2b2b2"></div><div style="position:absolute;left:503.5px;top:203.4px;width:6.5px;height:1px;background:#b2b2b2"></div><div style="position:absolute;left:502px;top:206.2px;width:9.5px;height:1px;background:#b2b2b2"></div><div style="position:absolute;left:503.5px;top:209px;width:6.5px;height:1px;background:#b2b2b2"></div><div style="position:absolute;left:518.5px;top:200.6px;width:9.5px;height:1px;background:#b2b2b2"></div><div style="position:absolute;left:521.5px;top:203.4px;width:6.5px;height:1px;background:#b2b2b2"></div><div style="position:absolute;left:518.5px;top:206.2px;width:9.5px;height:1px;background:#b2b2b2"></div><div style="position:absolute;left:521.5px;top:209px;width:6.5px;height:1px;background:#b2b2b2"></div><div style="position:absolute;left:535.5px;top:200.6px;width:9.5px;height:1px;background:#b2b2b2"></div><div style="position:absolute;left:535.5px;top:203.4px;width:9.5px;height:1px;background:#b2b2b2"></div><div style="position:absolute;left:535.5px;top:206.2px;width:9.5px;height:1px;background:#b2b2b2"></div><div style="position:absolute;left:535.5px;top:209px;width:9.5px;height:1px;background:#b2b2b2"></div><svg class="i" style="left:567.5px;top:199px" width="12" height="12" viewBox="0 0 12 12"><path d="M1 3.4 L4.6 1 L7.4 2.6 V6 L4 8 L1 6.4Z" fill="#d6d6d6" stroke="#b0b0b0" stroke-width="0.7"/><rect x="5.4" y="5.4" width="5.6" height="5.6" fill="#e6e6e6" stroke="#b0b0b0" stroke-width="0.8"/><path d="M6.6 7.2 H9.8 M6.6 9 H9.8" stroke="#b0b0b0" stroke-width="0.7"/></svg><svg class="i" style="left:581.9px;top:203.7px" width="5.2" height="3.9" viewBox="0 0 8 6"><path d="M1.5 1.6 L4 4.2 L6.5 1.6" fill="none" stroke="#c4c4c4" stroke-width="1" stroke-linecap="round" stroke-linejoin="round"/></svg><span class="t" style="left:521.0px;top:214.8px;font-size:8px;line-height:10px;color:#4a4a4a;transform:scaleX(0.891);">Абзац</span><svg class="i" style="left:587.0px;top:216.5px" width="7" height="7" viewBox="0 0 7 7"><path d="M0.5 5.5 V0.5 H5.5 M3 3 L6.2 6.2 M6.3 3.6 V6.3 H3.6" fill="none" stroke="#8a8a8a" stroke-width="0.9"/></svg><div style="position:absolute;left:598px;top:166px;width:1px;height:56px;background:#dcdcdc"></div><svg class="i" style="left:604px;top:165px" width="20" height="21" viewBox="0 0 20 21"><rect x="1.2" y="1.2" width="12.6" height="12" fill="#5aa0e6" stroke="#2f6fb8" stroke-width="1"/><circle cx="12.6" cy="13.2" r="6.4" fill="#fff" stroke="#444" stroke-width="1.1"/></svg><span class="t" style="left:603.0px;top:187.7px;font-size:9.2px;line-height:11px;color:#3a3a3a;transform:scaleX(0.903);">Фігури</span><svg class="i" style="left:612.0px;top:201.2px" width="6" height="4.5" viewBox="0 0 8 6"><path d="M1.5 1.6 L4 4.2 L6.5 1.6" fill="none" stroke="#555" stroke-width="1" stroke-linecap="round" stroke-linejoin="round"/></svg><svg class="i" style="left:646px;top:165px" width="21" height="21" viewBox="0 0 21 21"><rect x="4.6" y="5" width="10.4" height="10.4" fill="#f6c766" stroke="#e0a030" stroke-width="1"/><rect x="1.2" y="1.4" width="7" height="7" fill="#fff" stroke="#555" stroke-width="1.1"/><rect x="12" y="12" width="7" height="7" fill="#fff" stroke="#555" stroke-width="1.1"/></svg><span class="t" style="left:631.0px;top:187.7px;font-size:9.2px;line-height:11px;color:#3a3a3a;transform:scaleX(0.861);">Упорядкувати</span><svg class="i" style="left:653.0px;top:201.2px" width="6" height="4.5" viewBox="0 0 8 6"><path d="M1.5 1.6 L4 4.2 L6.5 1.6" fill="none" stroke="#555" stroke-width="1" stroke-linecap="round" stroke-linejoin="round"/></svg><svg class="i" style="left:691px;top:166px" width="23" height="21" viewBox="0 0 23 21"><rect x="1.4" y="1.2" width="17.6" height="17" rx="1.6" fill="#f0f0f0" stroke="#c4c4c4" stroke-width="1.1"/><path d="M9 16.6 C11 14.6 16 8.6 20.6 5.6 L21.6 6.8 C18.6 11 13.2 16 11 18.4 C9.6 19 8.6 18 9 16.6Z" fill="#e2e2e2" stroke="#b4b4b4" stroke-width="0.9"/></svg><span class="t" style="left:686.0px;top:187.7px;font-size:9.2px;line-height:11px;color:#b8b8b8;transform:scaleX(0.835);">Експрес-</span><span class="t" style="left:691.0px;top:198.8px;font-size:9.2px;line-height:11px;color:#b8b8b8;transform:scaleX(0.796);">стилі</span><svg class="i" style="left:709.4px;top:202.9px" width="5.2" height="3.9" viewBox="0 0 8 6"><path d="M1.5 1.6 L4 4.2 L6.5 1.6" fill="none" stroke="#c4c4c4" stroke-width="1" stroke-linecap="round" stroke-linejoin="round"/></svg><svg class="i" style="left:721.5px;top:164px" width="13" height="13" viewBox="0 0 13 13"><path d="M3.4 6.2 L7 2 L10 5 L6.4 8.6Z" fill="none" stroke="#a8a8a8" stroke-width="0.9"/><path d="M6.6 1 V3" stroke="#a8a8a8" stroke-width="0.8"/><path d="M1.4 11.4 H11.6" stroke="#b4b4b4" stroke-width="1.6"/></svg><svg class="i" style="left:740.9px;top:169.1px" width="5.2" height="3.9" viewBox="0 0 8 6"><path d="M1.5 1.6 L4 4.2 L6.5 1.6" fill="none" stroke="#d2d2d2" stroke-width="1" stroke-linecap="round" stroke-linejoin="round"/></svg><svg class="i" style="left:721.5px;top:181px" width="13" height="13" viewBox="0 0 13 13"><rect x="1.6" y="1.6" width="9" height="6.6" fill="none" stroke="#a8a8a8" stroke-width="0.9"/><path d="M5 7 L10.6 1.6" stroke="#a8a8a8" stroke-width="0.9"/><path d="M1.4 11.4 H11.6" stroke="#b4b4b4" stroke-width="1.6"/></svg><svg class="i" style="left:740.9px;top:186.1px" width="5.2" height="3.9" viewBox="0 0 8 6"><path d="M1.5 1.6 L4 4.2 L6.5 1.6" fill="none" stroke="#d2d2d2" stroke-width="1" stroke-linecap="round" stroke-linejoin="round"/></svg><svg class="i" style="left:721.5px;top:198.5px" width="13" height="12" viewBox="0 0 13 12"><path d="M2.4 4.4 C2.4 2 10.2 2 10.2 4.4 V7 C10.2 9.6 2.4 9.6 2.4 7Z" fill="#ddd" stroke="#a8a8a8" stroke-width="0.9"/><ellipse cx="6.3" cy="4.4" rx="3.9" ry="1.9" fill="#f2f2f2" stroke="#a8a8a8" stroke-width="0.8"/></svg><svg class="i" style="left:740.9px;top:203.5px" width="5.2" height="3.9" viewBox="0 0 8 6"><path d="M1.5 1.6 L4 4.2 L6.5 1.6" fill="none" stroke="#d2d2d2" stroke-width="1" stroke-linecap="round" stroke-linejoin="round"/></svg><span class="t" style="left:652.0px;top:214.8px;font-size:8px;line-height:10px;color:#4a4a4a;transform:scaleX(0.859);">Малювання</span><svg class="i" style="left:747.0px;top:216.5px" width="7" height="7" viewBox="0 0 7 7"><path d="M0.5 5.5 V0.5 H5.5 M3 3 L6.2 6.2 M6.3 3.6 V6.3 H3.6" fill="none" stroke="#8a8a8a" stroke-width="0.9"/></svg><div style="position:absolute;left:757px;top:166px;width:1px;height:56px;background:#dcdcdc"></div><svg class="i" style="left:773px;top:164px" width="24" height="22" viewBox="0 0 24 22"><circle cx="15" cy="8" r="6.4" fill="none" stroke="#555" stroke-width="1.15"/><path d="M10.4 12.8 L2.4 20.6" stroke="#555" stroke-width="1.25" stroke-linecap="round"/></svg><span class="t" style="left:762.0px;top:186.8px;font-size:9.2px;line-height:11px;color:#3a3a3a;transform:scaleX(0.841);">Редагування</span><svg class="i" style="left:781.3px;top:200.2px" width="6" height="4.5" viewBox="0 0 8 6"><path d="M1.5 1.6 L4 4.2 L6.5 1.6" fill="none" stroke="#555" stroke-width="1" stroke-linecap="round" stroke-linejoin="round"/></svg><div style="position:absolute;left:813px;top:166px;width:1px;height:56px;background:#dcdcdc"></div><svg class="i" style="left:830px;top:165.5px" width="23" height="22" viewBox="0 0 23 22"><path d="M2.4 1.2 H11 L15 5.2 V11 M9 19 H2.4 V1.2" fill="none" stroke="#4a7fd4" stroke-width="1.1" stroke-linejoin="round"/><path d="M5 12 C7 10 8.2 7 7.8 4.8 C7.6 3.8 6.6 4 6.8 5.2 C7.2 8 9.6 10.4 12 10.6" fill="none" stroke="#4a7fd4" stroke-width="0.9"/><path d="M12 17.6 L10.6 19 C9.4 20.2 7.6 18.4 8.8 17.2 L11.6 14.4 C12.6 13.4 14 14 14.2 14.8 M15 13 L16.4 11.6 C17.6 10.4 19.4 12.2 18.2 13.4 L15.4 16.2 C14.4 17.2 13 16.6 12.8 15.8" fill="none" stroke="#3a6cc0" stroke-width="1.1" stroke-linecap="round"/></svg><span class="t" style="left:822.0px;top:187.7px;font-size:9.2px;line-height:11px;color:#3a3a3a;transform:scaleX(0.855);">Створити</span><span class="t" style="left:821.0px;top:198.8px;font-size:9.2px;line-height:11px;color:#3a3a3a;transform:scaleX(0.817);">PDF-файл</span><span class="t" style="left:815.0px;top:214.8px;font-size:8px;line-height:10px;color:#4a4a4a;transform:scaleX(0.896);">Adobe Acrobat</span><div style="position:absolute;left:866px;top:166px;width:1px;height:56px;background:#dcdcdc"></div><svg class="i" style="left:886px;top:165px" width="17" height="22" viewBox="0 0 17 22"><rect x="5" y="1" width="7" height="12.6" rx="3.5" fill="#8cc0f0" stroke="#3d86d4" stroke-width="1"/><path d="M2.2 10 C2.2 18 14.8 18 14.8 10 M8.5 16.2 V20.4" fill="none" stroke="#5a5a5a" stroke-width="1.1" stroke-linecap="round"/></svg><span class="t" style="left:871.0px;top:187.7px;font-size:9.2px;line-height:11px;color:#3a3a3a;transform:scaleX(0.837);">Надиктувати</span><svg class="i" style="left:890.5px;top:201.2px" width="6" height="4.5" viewBox="0 0 8 6"><path d="M1.5 1.6 L4 4.2 L6.5 1.6" fill="none" stroke="#555" stroke-width="1" stroke-linecap="round" stroke-linejoin="round"/></svg><span class="t" style="left:885.0px;top:214.8px;font-size:8px;line-height:10px;color:#4a4a4a;transform:scaleX(0.870);">Голос</span><div style="position:absolute;left:923px;top:166px;width:1px;height:56px;background:#dcdcdc"></div><svg class="i" style="left:940px;top:165.5px" width="21" height="21" viewBox="0 0 21 21"><rect x="1" y="1" width="18.6" height="18.6" fill="#fbe3da" stroke="#e0714a" stroke-width="1.1"/><rect x="3.4" y="3.4" width="6" height="6" fill="#fff" stroke="#e0714a" stroke-width="0.9"/><rect x="11.2" y="3.4" width="6" height="6" fill="#fff" stroke="#e0714a" stroke-width="0.9"/><rect x="3.4" y="11.2" width="6" height="6" fill="#fff" stroke="#e0714a" stroke-width="0.9"/><rect x="11.2" y="11.2" width="6" height="6" fill="#fff" stroke="#e0714a" stroke-width="0.9"/></svg><span class="t" style="left:930.0px;top:187.7px;font-size:9.2px;line-height:11px;color:#3a3a3a;transform:scaleX(0.862);">Надбудови</span><span class="t" style="left:932.0px;top:214.8px;font-size:8px;line-height:10px;color:#4a4a4a;transform:scaleX(0.869);">Надбудови</span><div style="position:absolute;left:977px;top:166px;width:1px;height:56px;background:#dcdcdc"></div><svg class="i" style="left:994px;top:164.5px" width="24" height="22" viewBox="0 0 24 22"><rect x="5" y="5.4" width="17" height="13.2" fill="#fff" stroke="#666" stroke-width="1.3"/><path d="M5 9.6 H22 M16 9.6 V18.6" stroke="#666" stroke-width="1.2"/><path d="M5.4 0.6 L2 8 H5.2 L3.6 13.4 L9 5.4 H5.8 L8 0.6Z" fill="#f6b73c" stroke="#e09a1c" stroke-width="0.6"/></svg><span class="t" style="left:983.0px;top:187.7px;font-size:9.2px;line-height:11px;color:#3a3a3a;transform:scaleX(0.867);">Конструктор</span><div style="position:absolute;left:1035px;top:166px;width:1px;height:56px;background:#dcdcdc"></div><svg class="i" style="left:1084.5px;top:214.0px" width="8" height="6" viewBox="0 0 8 6"><path d="M1.5 1.6 L4 4.2 L6.5 1.6" fill="none" stroke="#444" stroke-width="1.1" stroke-linecap="round" stroke-linejoin="round"/></svg><div id="panel"></div><div id="ptrack"></div><div id="main"></div><span class="t" style="left:103.5px;top:230.5px;font-size:11px;line-height:13px;color:#555;transform:scaleX(0.834);">7</span><span class="t" style="left:103.5px;top:310.5px;font-size:11px;line-height:13px;color:#555;transform:scaleX(0.866);">8</span><span class="t" style="left:103.5px;top:390.5px;font-size:11px;line-height:13px;color:#555;transform:scaleX(0.866);">9</span><span class="t" style="left:98.5px;top:470.5px;font-size:11px;line-height:13px;color:#555;transform:scaleX(0.858);">10</span><span class="t" style="left:99.0px;top:552.0px;font-size:11px;line-height:13px;color:#c8413a;transform:scaleX(0.841);">11</span><div class="th" style="top:233px"></div><span class="t" style="left:133.4px;top:235.9px;font-size:3.5px;line-height:4px;color:#222;font-weight:bold;font-family:'Liberation Serif',serif;transform:scaleX(0.982);">Основні вузлові та геополітичного структурування світу</span><svg class="i" style="left:131.2px;top:244.9px" width="22.8" height="32.9" viewBox="0 0 23 33"><defs><linearGradient id="p7" x1="0" x2="1" y1="0" y2="1"><stop offset="0" stop-color="#9c9c9c"/><stop offset="1" stop-color="#6c6c6c"/></linearGradient></defs><rect width="23" height="33" fill="url(#p7)"/><path d="M0 33 V22 C2 19.6 5 18.4 8 17.6 L15 17.6 C19 18.6 22 20.4 23 23 V33Z" fill="#404040"/><path d="M8.6 17 L10.8 30 L13.6 17Z" fill="#e2e2e2"/><path d="M10.6 19 L11.6 30 L12.4 19Z" fill="#2c2c2c"/><ellipse cx="10.6" cy="11.4" rx="4.9" ry="6.6" fill="#cfcfcf"/><path d="M5.4 9.6 C5.2 5 8 3.6 10.6 3.6 C13.4 3.6 16 5 15.8 9.6 C14.8 7 13.4 6.4 10.6 6.4 C8 6.4 6.4 7 5.4 9.6Z" fill="#ededed"/><path d="M6.6 10.6 H14.6" stroke="#555" stroke-width="0.7"/></svg><div style="position:absolute;left:161px;top:244.4px;width:57.8px;height:1px;background:#777;opacity:0.8;"></div><div style="position:absolute;left:163px;top:246.6px;width:11.4px;height:1px;background:#888;opacity:0.8;"></div><div style="position:absolute;left:161px;top:251.7px;width:56.7px;height:1px;background:#888;opacity:0.8;"></div><div style="position:absolute;left:163px;top:253.9px;width:35px;height:1px;background:#444;opacity:0.8;"></div><div style="position:absolute;left:161px;top:259.7px;width:57.8px;height:1px;background:#777;opacity:0.8;"></div><div style="position:absolute;left:161px;top:261.7px;width:15px;height:1px;background:#777;opacity:0.8;"></div><div style="position:absolute;left:161px;top:267.4px;width:28.6px;height:1px;background:#888;opacity:0.8;"></div><div style="position:absolute;left:161px;top:270.2px;width:10px;height:1px;background:#555;opacity:0.8;"></div><div style="position:absolute;left:161px;top:273.2px;width:26.3px;height:1px;background:#555;opacity:0.8;"></div><div style="position:absolute;left:161px;top:276px;width:32px;height:1px;background:#333;opacity:0.8;"></div><div style="position:absolute;left:161px;top:279px;width:12.9px;height:1px;background:#444;opacity:0.8;"></div><div style="position:absolute;left:161px;top:282px;width:12.9px;height:1px;background:#444;opacity:0.8;"></div><div style="position:absolute;left:161px;top:284.8px;width:14.5px;height:1px;background:#444;opacity:0.8;"></div><div style="position:absolute;left:161px;top:287.8px;width:25.2px;height:1px;background:#444;opacity:0.8;"></div><div style="position:absolute;left:161px;top:290.4px;width:28px;height:1px;background:#666;opacity:0.8;"></div><div class="th" style="top:313px;background:#ebe9ef"></div><svg class="i" style="left:120px;top:313px" width="117" height="66.4" viewBox="0 0 117 66.4"><path d="M2.8 14.6 L7.3 10.7 L18.5 9.6 L33.1 6.2 L47.8 6.2 L45.5 10.7 L38.8 12.9 L34.3 16.3 L33.1 19.1 L28.7 20.8 L24.2 24.2 L22.5 26.4 L17.4 25.3 L11.8 25.3 L9.6 19.7 L8.4 16.3Z" fill="#0c0cf2" stroke="#0c0cf2" stroke-width="0.5" stroke-linejoin="round"/><path d="M24 17 L29 14.6 L31 17.6 L27 19.6Z M31 9 L36 8 L35 10.6 L31.6 11Z" fill="#ebe9ef"/><path d="M11.8 25.3 L17.4 25.3 L22.5 28.7 L24.2 33.1 L21.9 34.3 L17 30Z" fill="#a06cd6" stroke="#a06cd6" stroke-width="0.5" stroke-linejoin="round"/><path d="M21.9 34.3 L27.5 33.1 L37.6 39.9 L36.5 45.5 L32 53.4 L29.8 60.1 L27.5 57.9 L24.2 47.8 L21.3 39.9Z" fill="#a06cd6" stroke="#a06cd6" stroke-width="0.5" stroke-linejoin="round"/><path d="M48.3 21.3 L50 17.4 L55.6 11.8 L60.1 10.1 L61.2 12.9 L60.1 19.1 L59 21.5 L54.5 21.9 L50 23Z" fill="#0c0cf2" stroke="#0c0cf2" stroke-width="0.5" stroke-linejoin="round"/><path d="M60.1 11.8 L69.1 9 L79.2 7.9 L91.6 9.6 L103.9 11.2 L102.8 14.6 L97.2 17.4 L92.7 16.9 L81.5 18 L77 20.2 L68 20.2 L60.1 21Z" fill="#1ec8ea" stroke="#1ec8ea" stroke-width="0.5" stroke-linejoin="round"/><path d="M45.5 27.5 L48.9 23 L59 21.3 L68 20.2 L77 20.2 L78.1 24.2 L74.7 27.5 L70.2 30.9 L68 33.7 L63.5 33.1 L54.5 33.7 L46.6 32.6Z" fill="#22c222" stroke="#22c222" stroke-width="0.5" stroke-linejoin="round"/><path d="M54.5 33.7 L63.5 33.1 L68 33.7 L69.1 36.5 L65.7 42.1 L63.5 48.9 L60.1 51.1 L57.3 47.8 L55.6 39.9Z" fill="#8c8c56" stroke="#8c8c56" stroke-width="0.5" stroke-linejoin="round"/><path d="M78.1 20.2 L82.6 18 L91.6 16.9 L96.1 19.1 L94.9 25.3 L91.6 28.7 L87.1 27.5 L84.8 23 L79.2 23Z" fill="#e01414" stroke="#e01414" stroke-width="0.5" stroke-linejoin="round"/><path d="M81.5 19.1 L88.2 18 L89.3 20.2 L83.7 21.3Z" fill="#f4e614" stroke="#f4e614" stroke-width="0.5" stroke-linejoin="round"/><path d="M79.2 23.6 L84.8 23 L86 26.4 L80.3 26.4Z" fill="#f4e614" stroke="#f4e614" stroke-width="0.5" stroke-linejoin="round"/><path d="M78.1 26.4 L84.8 27 L82.6 30.9 L80.3 33.7 L78.1 29.8Z" fill="#f39a10" stroke="#f39a10" stroke-width="0.5" stroke-linejoin="round"/><path d="M87.1 28.7 L91.6 29.8 L94.9 33.1 L97.2 37.6 L92.7 39.9 L88.2 36.5Z" fill="#30c060" stroke="#30c060" stroke-width="0.5" stroke-linejoin="round"/><path d="M92.1 47.8 L97.2 43.3 L103.9 42.7 L105.6 47.8 L103.9 52.2 L100.6 53.4 L96.1 51.1 L92.1 50.6Z" fill="#0c0cf2" stroke="#0c0cf2" stroke-width="0.5" stroke-linejoin="round"/><path d="M106.7 56.2 L112.4 52.8 L112.9 53.6 L107.9 56.7Z" fill="#0c0cf2" stroke="#0c0cf2" stroke-width="0.5" stroke-linejoin="round"/><path d="M97 40 L101 40.6 L103 42 L99 42Z" fill="#0c0cf2" stroke="#0c0cf2" stroke-width="0.5" stroke-linejoin="round"/><path d="M67.5 44 L69 42 L69.4 45 L68 47Z" fill="#8c8c56" stroke="#8c8c56" stroke-width="0.5" stroke-linejoin="round"/><rect x="7.9" y="41" width="1.2" height="2.4" fill="#22a"/><rect x="7.9" y="43.6" width="1.2" height="2.2" fill="#3b3"/><rect x="7.9" y="46" width="1.2" height="2.2" fill="#cc4"/><rect x="7.9" y="48.4" width="1.2" height="2.2" fill="#e93"/><rect x="7.9" y="50.8" width="1.2" height="2.4" fill="#d22"/><rect x="7.9" y="53.4" width="1.2" height="2.2" fill="#a6d"/><rect x="9.6" y="41" width="6" height="14.6" fill="#f6f4f8" opacity="0.7"/></svg><div class="th" style="top:393px;overflow:hidden"><div style="height:15px;background:linear-gradient(90deg,#0b1620,#173d5c 50%,#0b1620)"></div></div><span class="t" style="left:139.0px;top:397.6px;font-size:4.6px;line-height:6px;color:#fff;font-weight:bold;font-family:'Liberation Serif',serif;transform:scaleX(1.072);">Закон дуалізму стихій Суші і Моря</span><div style="position:absolute;left:126px;top:414.4px;width:83px;height:7.6px;background:#ee7a30;border-radius:1px;box-shadow:0.5px 0.8px 1px rgba(0,0,0,0.3);"></div><div style="position:absolute;left:129px;top:417.6px;width:45.65px;height:0.9px;background:#fff;opacity:0.75;"></div><div style="position:absolute;left:132px;top:425px;width:84px;height:7.6px;background:#2f7a34;border-radius:1px;box-shadow:0.5px 0.8px 1px rgba(0,0,0,0.3);"></div><div style="position:absolute;left:135px;top:428.2px;width:46.2px;height:0.9px;background:#fff;opacity:0.75;"></div><div style="position:absolute;left:140px;top:435.6px;width:84px;height:7.6px;background:#1fa0d6;border-radius:1px;box-shadow:0.5px 0.8px 1px rgba(0,0,0,0.3);"></div><div style="position:absolute;left:143px;top:438.8px;width:46.2px;height:0.9px;background:#fff;opacity:0.75;"></div><div style="position:absolute;left:147px;top:446.2px;width:84px;height:7.6px;background:#a431a8;border-radius:1px;box-shadow:0.5px 0.8px 1px rgba(0,0,0,0.3);"></div><div style="position:absolute;left:150px;top:449.4px;width:46.2px;height:0.9px;background:#fff;opacity:0.75;"></div><div style="position:absolute;left:206.5px;top:421.6px;width:3.2px;height:3.2px;background:#cfd4d8;border-radius:50%"></div><div style="position:absolute;left:214px;top:432.2px;width:3.2px;height:3.2px;background:#cfd4d8;border-radius:50%"></div><div style="position:absolute;left:221.5px;top:443px;width:3.2px;height:3.2px;background:#cfd4d8;border-radius:50%"></div><div class="th" style="top:473px"></div><span class="t" style="left:154.8px;top:477.8px;font-size:3.3px;line-height:4px;color:#222;font-weight:bold;font-family:'Liberation Serif',serif;transform:scaleX(0.881);">Закон дуалізму стихій Суші і Моря</span><div style="position:absolute;left:133.4px;top:487.9px;width:86.6px;height:1px;background:#333;opacity:0.8;"></div><div style="position:absolute;left:133.4px;top:489.7px;width:27.6px;height:1px;background:#333;opacity:0.8;"></div><div style="position:absolute;left:133.4px;top:497.3px;width:86.6px;height:1px;background:#aaa;opacity:0.8;"></div><div style="position:absolute;left:133.4px;top:499.7px;width:86.6px;height:1px;background:#aaa;opacity:0.8;"></div><div style="position:absolute;left:133.4px;top:501.8px;width:63.5px;height:1px;background:#aaa;opacity:0.8;"></div><div style="position:absolute;left:133.4px;top:509.1px;width:86.6px;height:1px;background:#333;opacity:0.8;"></div><div style="position:absolute;left:133.4px;top:511.5px;width:23px;height:1px;background:#333;opacity:0.8;"></div><div style="position:absolute;left:133.4px;top:518.6px;width:86.6px;height:1px;background:#b4b4b4;opacity:0.8;"></div><div style="position:absolute;left:133.4px;top:520.9px;width:18px;height:1px;background:#b4b4b4;opacity:0.8;"></div><div style="position:absolute;left:133.4px;top:528.7px;width:86.6px;height:1px;background:#aaa;opacity:0.8;"></div><div style="position:absolute;left:133.4px;top:530.9px;width:86.6px;height:1px;background:#aaa;opacity:0.8;"></div><div style="position:absolute;left:133.4px;top:533.2px;width:20.8px;height:1px;background:#aaa;opacity:0.8;"></div><div class="th" style="left:117px;top:551.8px;width:122px;height:60px;border:2px solid #7f1726;border-radius:5px;overflow:hidden"><div style="position:absolute;left:-0.3px;top:0px;width:650.7px;height:367px;transform:scale(0.1822);transform-origin:0 0"><div class="st" style="left:124px;top:36.5px;font-size:30px;line-height:36px;font-weight:bold;letter-spacing:0.02px">Геополітичний вибір України</div><div class="st" style="left:50.2px;top:98.7px;font-size:19px;line-height:24px"><b>Декларація про державний суверенітет України</b> - документ про</div><div class="st" style="left:50.2px;top:119.2px;font-size:19px;line-height:24px">проголошення державного суверенітету України.</div><div class="st" style="left:50.2px;top:139.7px;font-size:19px;line-height:24px">Ухвалена Верховною Радою Української РСР 16 липня 1990 року.</div><div class="st" style="left:50.2px;top:193.7px;font-size:19px;line-height:24px">- … прагнення до створення демократичного суспільства;</div><div class="st" style="left:50.2px;top:220.5px;font-size:19px;line-height:24px">- … безпосередньо брати участь у загальноєвропейському процесі</div><div class="st" style="left:50.2px;top:240.5px;font-size:19px;line-height:24px">та європейських структупах</div></div></div><svg class="i" style="left:251.5px;top:229px" width="8" height="6" viewBox="0 0 8 6"><path d="M0.6 5 L4 1 L7.4 5Z" fill="#666"/></svg><div style="position:absolute;left:252.5px;top:290px;width:5.2px;height:43px;background:#767676;border-radius:3px;"></div><div id="slide"><div class="st" style="left:124px;top:36.5px;font-size:30px;line-height:36px;font-weight:bold;letter-spacing:0.02px">Геополітичний вибір України</div><div class="st" style="left:50.2px;top:98.7px;font-size:19px;line-height:24px"><b><span style="text-decoration:underline;text-decoration-color:#e98f96;text-decoration-thickness:1px;text-underline-offset:2.5px;">Декларація</span> про <span style="text-decoration:underline;text-decoration-color:#e98f96;text-decoration-thickness:1px;text-underline-offset:2.5px;">державний</span> <span style="text-decoration:underline;text-decoration-color:#e98f96;text-decoration-thickness:1px;text-underline-offset:2.5px;">суверенітет</span> <span style="text-decoration:underline;text-decoration-color:#e98f96;text-decoration-thickness:1px;text-underline-offset:2.5px;">України</span></b> - документ про</div><div class="st" style="left:50.2px;top:119.2px;font-size:19px;line-height:24px"><span style="text-decoration:underline;text-decoration-color:#e98f96;text-decoration-thickness:1px;text-underline-offset:2.5px;">проголошення</span> державного <span style="text-decoration:underline;text-decoration-color:#e98f96;text-decoration-thickness:1px;text-underline-offset:2.5px;">суверенітету</span> <span style="text-decoration:underline;text-decoration-color:#e98f96;text-decoration-thickness:1px;text-underline-offset:2.5px;">України</span>.</div><div class="st" style="left:50.2px;top:139.7px;font-size:19px;line-height:24px"><span style="text-decoration:underline;text-decoration-color:#e98f96;text-decoration-thickness:1px;text-underline-offset:2.5px;">Ухвалена</span> Верховною Радою <span style="text-decoration:underline;text-decoration-color:#e98f96;text-decoration-thickness:1px;text-underline-offset:2.5px;">Української</span> РСР 16 липня 1990 року.</div><div class="st" style="left:50.2px;top:193.7px;font-size:19px;line-height:24px">- … <span style="text-decoration:underline;text-decoration-color:#e98f96;text-decoration-thickness:1px;text-underline-offset:2.5px;">прагнення</span> до <span style="text-decoration:underline;text-decoration-color:#e98f96;text-decoration-thickness:1px;text-underline-offset:2.5px;">створення</span> демократичного <span style="text-decoration:underline;text-decoration-color:#e98f96;text-decoration-thickness:1px;text-underline-offset:2.5px;">суспільства</span>;</div><div class="st" style="left:50.2px;top:220.5px;font-size:19px;line-height:24px">- … <span style="text-decoration:underline;text-decoration-color:#e98f96;text-decoration-thickness:1px;text-underline-offset:2.5px;">безпосередньо</span> <span style="text-decoration:underline;text-decoration-color:#e98f96;text-decoration-thickness:1px;text-underline-offset:2.5px;">брати</span> участь у <span style="text-decoration:underline;text-decoration-color:#e98f96;text-decoration-thickness:1px;text-underline-offset:2.5px;">загальноєвропейському</span> <span style="text-decoration:underline;text-decoration-color:#e98f96;text-decoration-thickness:1px;text-underline-offset:2.5px;">процесі</span></div><div class="st" style="left:50.2px;top:240.5px;font-size:19px;line-height:24px">та <span style="text-decoration:underline;text-decoration-color:#e98f96;text-decoration-thickness:1px;text-underline-offset:2.5px;">європейських</span> <span style="text-decoration:underline;text-decoration-color:#e98f96;text-decoration-thickness:1px;text-underline-offset:2.5px;">структупах</span></div></div><div style="position:absolute;left:618.2px;top:422.5px;width:0.9px;height:7px;background:#555;"></div><div style="position:absolute;left:616.6px;top:422.3px;width:4px;height:0.8px;background:#666;"></div><div style="position:absolute;left:616.6px;top:429px;width:4px;height:0.8px;background:#666;"></div><div style="position:absolute;left:1092px;top:227px;width:11px;height:372px;background:#f1f1f1"></div><svg class="i" style="left:1093.5px;top:229px" width="8" height="6" viewBox="0 0 8 6"><path d="M0.6 5 L4 1 L7.4 5Z" fill="#666"/></svg><div style="position:absolute;left:1094.6px;top:310px;width:5.2px;height:12px;background:#6e6e6e;border-radius:3px;"></div><svg class="i" style="left:1093.5px;top:563px" width="8" height="32" viewBox="0 0 8 32"><path d="M0.6 1 L4 5 L7.4 1Z" fill="#555"/><path d="M0.8 14 L4 10.4 L7.2 14Z M0.8 17.6 L4 14 L7.2 17.6Z" fill="#555"/><path d="M0.8 20.5 L4 24.1 L7.2 20.5Z M0.8 24.1 L4 27.7 L7.2 24.1Z" fill="#555"/></svg><div id="ztool"></div><div id="taskbar"></div><div style="position:absolute;left:0;top:644px;width:1200px;height:1px;background:#4a5a6c"></div><svg class="i" style="left:27px;top:605px" width="22" height="24" viewBox="0 0 22 24"><rect x="7.6" y="2" width="6.8" height="12" rx="3.4" fill="none" stroke="#fff" stroke-width="1.4"/><path d="M4.4 10.6 C4.4 19 17.6 19 17.6 10.6 M11 17 V21.4 M7.4 21.6 H14.6" fill="none" stroke="#fff" stroke-width="1.4" stroke-linecap="round"/><path d="M19.6 2.4 L2.6 19.4" stroke="#f0384c" stroke-width="1.7" stroke-linecap="round"/></svg><svg class="i" style="left:58.5px;top:612.5px" width="9" height="7" viewBox="0 0 9 7"><path d="M1.4 5.2 L4.5 2 L7.6 5.2" fill="none" stroke="#fff" stroke-width="1.5" stroke-linecap="round" stroke-linejoin="round"/></svg><span class="t" style="left:28.0px;top:628.5px;font-size:10.8px;line-height:13px;color:#fff;transform:scaleX(0.926);">Звук</span><svg class="i" style="left:101px;top:609px" width="22" height="14" viewBox="0 0 22 14"><rect x="1" y="1" width="13" height="12" rx="3" fill="none" stroke="#fff" stroke-width="1.4"/><path d="M14.6 6 L20.4 2.4 V11.6 L14.6 8" fill="none" stroke="#fff" stroke-width="1.4" stroke-linejoin="round"/></svg><svg class="i" style="left:135.5px;top:612.5px" width="9" height="7" viewBox="0 0 9 7"><path d="M1.4 5.2 L4.5 2 L7.6 5.2" fill="none" stroke="#fff" stroke-width="1.5" stroke-linecap="round" stroke-linejoin="round"/></svg><span class="t" style="left:97.0px;top:628.5px;font-size:10.8px;line-height:13px;color:#fff;transform:scaleX(0.903);">Видео</span><svg class="i" style="left:271.5px;top:609px" width="17" height="16" viewBox="0 0 17 16"><circle cx="5.2" cy="3.6" r="2.6" fill="none" stroke="#fff" stroke-width="1.3"/><circle cx="11.8" cy="5.8" r="2.2" fill="none" stroke="#fff" stroke-width="1.3"/><path d="M1 14.6 C0.6 10.6 2.4 8.6 5.2 8.6 C8 8.6 9.6 10.6 9.4 14.6Z" fill="none" stroke="#fff" stroke-width="1.3" stroke-linejoin="round"/><path d="M9.6 14.8 H15.6 C16.2 11.8 14.6 10 12 10 C11 10 10.2 10.3 9.6 10.8" fill="none" stroke="#fff" stroke-width="1.3" stroke-linejoin="round"/></svg><span class="t" style="left:295.0px;top:608.8px;font-size:10px;line-height:12px;color:#cfcfcf;transform:scaleX(0.899);">8</span><svg class="i" style="left:316.5px;top:612.5px" width="9" height="7" viewBox="0 0 9 7"><path d="M1.4 5.2 L4.5 2 L7.6 5.2" fill="none" stroke="#fff" stroke-width="1.5" stroke-linecap="round" stroke-linejoin="round"/></svg><span class="t" style="left:256.5px;top:628.5px;font-size:10.8px;line-height:13px;color:#fff;transform:scaleX(0.907);">Участники</span><svg class="i" style="left:356.5px;top:607px" width="19" height="18" viewBox="0 0 19 18"><path d="M5.6 4 C5.6 2 6.8 1 8.6 1 H14.6 C16.8 1 18 2.2 18 4.2 V8 C18 9.8 17 10.8 15.4 11" fill="none" stroke="#fff" stroke-width="1.3"/><path d="M4 4.6 H12 C14 4.6 15 5.8 15 7.4 V11 C15 12.8 14 13.8 12 13.8 H7.4 L4.2 16.6 V13.8 H4 C2 13.8 1 12.8 1 11 V7.4 C1 5.8 2 4.6 4 4.6Z" fill="#000" stroke="#fff" stroke-width="1.3" stroke-linejoin="round"/><g fill="#fff"><circle cx="5" cy="9.2" r="0.9"/><circle cx="8" cy="9.2" r="0.9"/><circle cx="11" cy="9.2" r="0.9"/></g></svg><svg class="i" style="left:387.5px;top:612.5px" width="9" height="7" viewBox="0 0 9 7"><path d="M1.4 5.2 L4.5 2 L7.6 5.2" fill="none" stroke="#fff" stroke-width="1.5" stroke-linecap="round" stroke-linejoin="round"/></svg><span class="t" style="left:359.0px;top:628.5px;font-size:10.8px;line-height:13px;color:#fff;transform:scaleX(0.854);">Чат</span><svg class="i" style="left:431px;top:608px" width="21" height="17" viewBox="0 0 21 17"><path d="M10.4 15.6 C6 12.6 1.2 9.6 1.2 5.6 C1.2 1 7.6 -0.4 10.4 4.2 C13.4 -0.4 19.8 1 19.8 5.6 C19.8 9.6 15 12.6 10.4 15.6Z" fill="none" stroke="#fff" stroke-width="1.4" stroke-linejoin="round" transform="rotate(-8 10.5 8.5)"/></svg><svg class="i" style="left:465.5px;top:612.5px" width="9" height="7" viewBox="0 0 9 7"><path d="M1.4 5.2 L4.5 2 L7.6 5.2" fill="none" stroke="#fff" stroke-width="1.5" stroke-linecap="round" stroke-linejoin="round"/></svg><span class="t" style="left:408.5px;top:628.5px;font-size:10.8px;line-height:13px;color:#fff;transform:scaleX(0.872);">Отреагировать</span><div style="position:absolute;left:509px;top:608.6px;width:19.6px;height:15px;border-radius:3px;background:#22d67c"></div><svg class="i" style="left:513px;top:610.5px" width="12" height="11" viewBox="0 0 12 11"><path d="M6 10 V2.2 M2.4 5.4 L6 1.6 L9.6 5.4" fill="none" stroke="#000" stroke-width="1.9" stroke-linecap="round" stroke-linejoin="round"/></svg><svg class="i" style="left:542.5px;top:612.5px" width="9" height="7" viewBox="0 0 9 7"><path d="M1.4 5.2 L4.5 2 L7.6 5.2" fill="none" stroke="#fff" stroke-width="1.5" stroke-linecap="round" stroke-linejoin="round"/></svg><span class="t" style="left:493.0px;top:628.5px;font-size:10.8px;line-height:13px;color:#fff;transform:scaleX(0.875);">Поделиться</span><svg class="i" style="left:617.5px;top:607px" width="16" height="18" viewBox="0 0 16 18"><path d="M8 1 C10.4 2.4 12.8 3 15 3 C15 9.4 13.6 14 8 17 C2.4 14 1 9.4 1 3 C3.2 3 5.6 2.4 8 1Z" fill="none" stroke="#fff" stroke-width="1.4" stroke-linejoin="round"/><path d="M8 4 V9 H3.8 C3.4 7.6 3.3 6.2 3.3 5 C5 4.9 6.6 4.6 8 4Z M8 9 H12.2 C11.6 11.2 10.4 12.8 8 14.2Z" fill="#fff"/></svg><span class="t" style="left:564.0px;top:628.5px;font-size:10.8px;line-height:13px;color:#fff;transform:scaleX(0.897);">Инструменты организатора</span><svg class="i" style="left:720px;top:608px" width="19" height="17" viewBox="0 0 19 17"><path d="M6.4 1.2 H4.6 C2.4 1.2 1.2 2.4 1.2 4.4 V6.4 M12.6 15.6 H14.4 C16.6 15.6 17.8 14.4 17.8 12.4 V10.4" fill="none" stroke="#fff" stroke-width="1.4" stroke-linecap="round"/><circle cx="13.6" cy="4.4" r="3" fill="none" stroke="#fff" stroke-width="1.4"/><circle cx="5" cy="12.4" r="3" fill="none" stroke="#fff" stroke-width="1.4"/></svg><svg class="i" style="left:749.5px;top:612.5px" width="9" height="7" viewBox="0 0 9 7"><path d="M1.4 5.2 L4.5 2 L7.6 5.2" fill="none" stroke="#fff" stroke-width="1.5" stroke-linecap="round" stroke-linejoin="round"/></svg><span class="t" style="left:700.7px;top:628.5px;font-size:10.8px;line-height:13px;color:#fff;transform:scaleX(0.901);">Приложения</span><div style="position:absolute;left:807.3px;top:607px;width:14.6px;height:15.4px;border:1.5px solid #fff;border-radius:4.5px"></div><div style="position:absolute;left:813px;top:612.2px;width:2px;height:7px;background:#fff;border-radius:1px"></div><div style="position:absolute;left:817.4px;top:612.2px;width:2px;height:7px;background:#fff;border-radius:1px"></div><div style="position:absolute;left:827.4px;top:607px;width:15.2px;height:15.4px;border:1.5px solid #fff;border-radius:4.5px"></div><div style="position:absolute;left:832.9px;top:612.1px;width:7.2px;height:7.2px;background:#fff;border-radius:1.8px"></div><span class="t" style="left:771.0px;top:628.5px;font-size:10.8px;line-height:13px;color:#fff;transform:scaleX(0.886);">Пауза/остановить запись</span><svg class="i" style="left:918.5px;top:606px" width="19" height="20" viewBox="0 0 19 20"><path d="M3.4 13.4 V3.6 C3.4 2.2 4.2 1.2 5.8 1.2 H12.4 C13.8 1.2 14.6 2 14.6 3.4 V13" fill="none" stroke="#fff" stroke-width="1.4"/><path d="M6.4 5 H11.6 M6.4 7.8 H11.6 M6.4 10.6 H9.4" stroke="#fff" stroke-width="1.2" stroke-linecap="round"/><path d="M1.4 13.6 H5.4 V16 C5.4 17.6 6.4 18.4 7.8 18.4 H3.6 C2.2 18.4 1.4 17.6 1.4 16Z" fill="none" stroke="#fff" stroke-width="1.2" stroke-linejoin="round"/><rect x="7" y="14.6" width="10.4" height="3.8" rx="1.9" fill="#fff"/></svg><svg class="i" style="left:951.5px;top:612.5px" width="9" height="7" viewBox="0 0 9 7"><path d="M1.4 5.2 L4.5 2 L7.6 5.2" fill="none" stroke="#fff" stroke-width="1.5" stroke-linecap="round" stroke-linejoin="round"/></svg><span class="t" style="left:899.0px;top:628.5px;font-size:10.8px;line-height:13px;color:#fff;transform:scaleX(0.911);">Примечания</span><svg class="i" style="left:996.5px;top:606px" width="21" height="21" viewBox="0 0 21 21"><circle cx="10.4" cy="10.4" r="8.6" fill="none" stroke="#fff" stroke-width="1.4"/><g fill="#fff"><circle cx="6.4" cy="10.4" r="1.15"/><circle cx="10.4" cy="10.4" r="1.15"/><circle cx="14.4" cy="10.4" r="1.15"/></g></svg><span class="t" style="left:972.0px;top:628.5px;font-size:10.8px;line-height:13px;color:#fff;transform:scaleX(0.901);">Дополнительно</span><svg class="i" style="left:1150px;top:606.5px" width="21" height="20" viewBox="0 0 21 20"><path d="M6 1.2 H15 L19.8 10 L15 18.8 H6 L1.2 10Z" fill="none" stroke="#f0384c" stroke-width="1.5" stroke-linejoin="round"/><circle cx="10.5" cy="10" r="5.6" fill="#000"/><path d="M7.8 7.3 L13.2 12.7 M13.2 7.3 L7.8 12.7" stroke="#fff" stroke-width="2" stroke-linecap="round"/></svg><span class="t" style="left:1133.4px;top:628.5px;font-size:10.8px;line-height:13px;color:#fff;transform:scaleX(0.869);">Завершение</span><span class="t" style="left:888.3px;top:564.5px;font-size:15.6px;line-height:19px;color:#b9b9b9;opacity:0.92;">Активация Windows</span><div style="position:absolute;left:888.3px;top:584.6px;width:214.7px;height:14px;overflow:hidden"><span class="t" style="left:0.0px;top:1.5px;font-size:10.6px;line-height:13px;color:#cdcdcd;transform:scaleX(1.053);">Чтобы активировать Windows, перейдите в раздел</span></div><div style="position:absolute;left:1103px;top:584.6px;width:60px;height:14px;overflow:hidden"><div style="position:absolute;left:-214.7px;top:0"><span class="t" style="left:0.0px;top:1.5px;font-size:10.6px;line-height:13px;color:#7aa0e8;transform:scaleX(1.053);">Чтобы активировать Windows, перейдите в раздел</span></div></div><span class="t" style="left:888.3px;top:601.7px;font-size:10.6px;line-height:13px;color:#7c7c7c;transform:scaleX(1.041);">"Параметры".</span><svg class="i" style="left:9px;top:654.5px" width="14" height="14" viewBox="0 0 14 14"><g fill="#fff"><path d="M0 2 L5.8 1.2 V6.6 H0Z"/><path d="M6.6 1.1 L14 0 V6.6 H6.6Z"/><path d="M0 7.4 H5.8 V12.8 L0 12Z"/><path d="M6.6 7.4 H14 V14 L6.6 12.9Z"/></g></svg><svg class="i" style="left:44px;top:650.5px" width="20" height="20" viewBox="0 0 20 20"><circle cx="11.6" cy="8.4" r="6.2" fill="none" stroke="#fff" stroke-width="1.9"/><path d="M7.2 12.8 L1.6 18.4" stroke="#fff" stroke-width="2.1" stroke-linecap="round"/></svg><svg class="i" style="left:83.5px;top:653.5px" width="16" height="14" viewBox="0 0 16 14"><rect x="2.6" y="3.4" width="7.6" height="7" fill="none" stroke="#fff" stroke-width="1.1"/><path d="M0.6 1.6 V12.4 M2.6 1 H10.2 M2.6 13 H10.2 M13.6 1 V13" stroke="#fff" stroke-width="1.1"/><path d="M12.2 3 H15 M12.2 7 H15" stroke="#fff" stroke-width="0.9"/></svg><svg class="i" style="left:121.5px;top:652px" width="19" height="16" viewBox="0 0 19 16"><path d="M0.6 2 C0.6 1.2 1 0.8 1.8 0.8 H6.6 L8.4 2.8 H17.2 C18 2.8 18.4 3.2 18.4 4 V14 C18.4 14.8 18 15.2 17.2 15.2 H1.8 C1 15.2 0.6 14.8 0.6 14Z" fill="#f5b93a"/><path d="M0.6 5 H18.4 V14 C18.4 14.8 18 15.2 17.2 15.2 H1.8 C1 15.2 0.6 14.8 0.6 14Z" fill="#fbd768"/><rect x="4.4" y="9" width="10.2" height="6.2" fill="#3f8fd8"/><rect x="6.2" y="11.6" width="6.6" height="3.6" fill="#fbd768"/></svg><div style="position:absolute;left:152px;top:644.5px;width:37.5px;height:31.5px;background:#22598c"></div><div style="position:absolute;left:152px;top:674.4px;width:37.5px;height:1.6px;background:#8ec4ee"></div><div style="position:absolute;left:160.5px;top:650.5px;width:19px;height:19px;border-radius:50%;background:#1b62f2"></div><span class="t" style="left:163.4px;top:656.8px;font-size:5.4px;line-height:6px;color:#fff;font-weight:bold;transform:scaleX(0.950);">zoom</span><svg class="i" style="left:865px;top:650.5px" width="21" height="17" viewBox="0 0 21 17"><path d="M5.4 15.6 C2.6 15.6 1 14 1 12 C1 10 2.6 8.6 4.6 8.8 C5 6.2 7.2 4.6 9.8 4.6 C12.4 4.6 14.2 6 15 8.2 C17.8 8 19.8 9.6 19.8 12 C19.8 14 18.2 15.6 16 15.6Z" fill="#e9edf4"/><path d="M8 15.6 C6 15.6 4.8 14.4 4.8 13 C4.8 11.6 6 10.6 7.6 10.8 C8.2 9.2 9.6 8.4 11.4 8.6 C13.2 8.8 14.2 9.8 14.6 11.2 C16.6 11.2 17.6 12.2 17.6 13.6 C17.6 14.8 16.6 15.6 15.2 15.6Z" fill="#b8c6da"/><circle cx="14.8" cy="4.6" r="3.9" fill="#e23b34"/><rect x="14.4" y="2.6" width="0.9" height="4" fill="#fff"/></svg><span class="t" style="left:891.0px;top:652.8px;font-size:12.6px;line-height:15px;color:#f3f5f8;transform:scaleX(0.804);">7°C</span><span class="t" style="left:914.0px;top:652.8px;font-size:12.6px;line-height:15px;color:#f3f5f8;transform:scaleX(0.905);">Cloudy</span><svg class="i" style="left:968.5px;top:656.5px" width="12" height="8" viewBox="0 0 12 8"><path d="M1 6.6 L6 1.4 L11 6.6" fill="none" stroke="#fff" stroke-width="1.1"/></svg><svg class="i" style="left:987.5px;top:655px" width="12" height="12" viewBox="0 0 12 12"><rect x="1.6" y="3.4" width="6" height="6" rx="1" fill="none" stroke="#fff" stroke-width="0.9"/><path d="M7.6 5.4 L10.6 3.8 V9 L7.6 7.4 M3 1 H6.2 M3 11.4 H6.2 M4.6 1 V3.4 M4.6 9.4 V11.4" fill="none" stroke="#fff" stroke-width="0.9"/><circle cx="4.6" cy="6.4" r="1" fill="#fff"/></svg><svg class="i" style="left:1007.5px;top:653.5px" width="10" height="15" viewBox="0 0 10 15"><rect x="2" y="0.6" width="6" height="9" rx="1.6" fill="#fff"/><path d="M1 9.4 H9 M5 9.6 V12 M2.6 13.4 C3.4 12.2 6.6 12.2 7.4 13.4" fill="none" stroke="#cfd6e2" stroke-width="1"/></svg><svg class="i" style="left:1024.5px;top:655.5px" width="13" height="10" viewBox="0 0 13 10"><rect x="2.4" y="2" width="10" height="6.6" rx="0.8" fill="#fff"/><rect x="0.4" y="1" width="3" height="3.4" fill="#fff"/><path d="M5 9.4 V8 M8 9.4 V8 M11 9.4 V8" stroke="#fff" stroke-width="0.8"/></svg><svg class="i" style="left:1043px;top:654px" width="13" height="13" viewBox="0 0 13 13"><g fill="none" stroke="#fff" stroke-linecap="round"><path d="M2 12 C2 6.4 6.4 2 12 2" stroke-width="1" opacity="0.55"/><path d="M4.8 12 C4.8 8 8 4.8 12 4.8" stroke-width="1" opacity="0.8"/><path d="M7.6 12 C7.6 9.6 9.6 7.6 12 7.6" stroke-width="1"/></g><circle cx="11.2" cy="11.2" r="1.1" fill="#fff"/></svg><svg class="i" style="left:1061.5px;top:654.5px" width="14" height="12" viewBox="0 0 14 12"><path d="M1 4.2 H3.2 L6 1.6 V10.4 L3.2 7.8 H1Z" fill="none" stroke="#fff" stroke-width="0.9" stroke-linejoin="round"/><path d="M8 4.2 C8.8 5.2 8.8 6.8 8 7.8 M9.8 2.8 C11.2 4.6 11.2 7.4 9.8 9.2 M11.6 1.4 C13.6 4 13.6 8 11.6 10.6" fill="none" stroke="#fff" stroke-width="0.85" stroke-linecap="round"/></svg><span class="t" style="left:1083.0px;top:654.6px;font-size:10px;line-height:12px;color:#f3f5f8;transform:scaleX(0.902);">УКР</span><span class="t" style="left:1122.0px;top:647.8px;font-size:10.8px;line-height:13px;color:#f3f5f8;transform:scaleX(0.796);">10:57</span><span class="t" style="left:1111.0px;top:661.5px;font-size:10.8px;line-height:13px;color:#f3f5f8;transform:scaleX(0.826);">11.03.2025</span><svg class="i" style="left:1168.5px;top:654px" width="15" height="14" viewBox="0 0 15 14"><path d="M1 1 H14 V10.4 H9.6 L7.4 13 V10.4 H1Z" fill="none" stroke="#fff" stroke-width="1" stroke-linejoin="round"/></svg><div style="position:absolute;left:12.5px;top:560.5px;width:25px;height:25px;border-radius:50%;background:#25282e"></div><svg class="i" style="left:18.5px;top:566px" width="14" height="14" viewBox="0 0 14 14"><path d="M3.2 8.6 L9.6 2.2 L11.8 4.4 L5.4 10.8 L2.6 11.4Z" fill="none" stroke="#23d68a" stroke-width="1.2" stroke-linejoin="round"/><path d="M2 13 H12.4" stroke="#23d68a" stroke-width="1.2" stroke-linecap="round"/></svg></body></html>
